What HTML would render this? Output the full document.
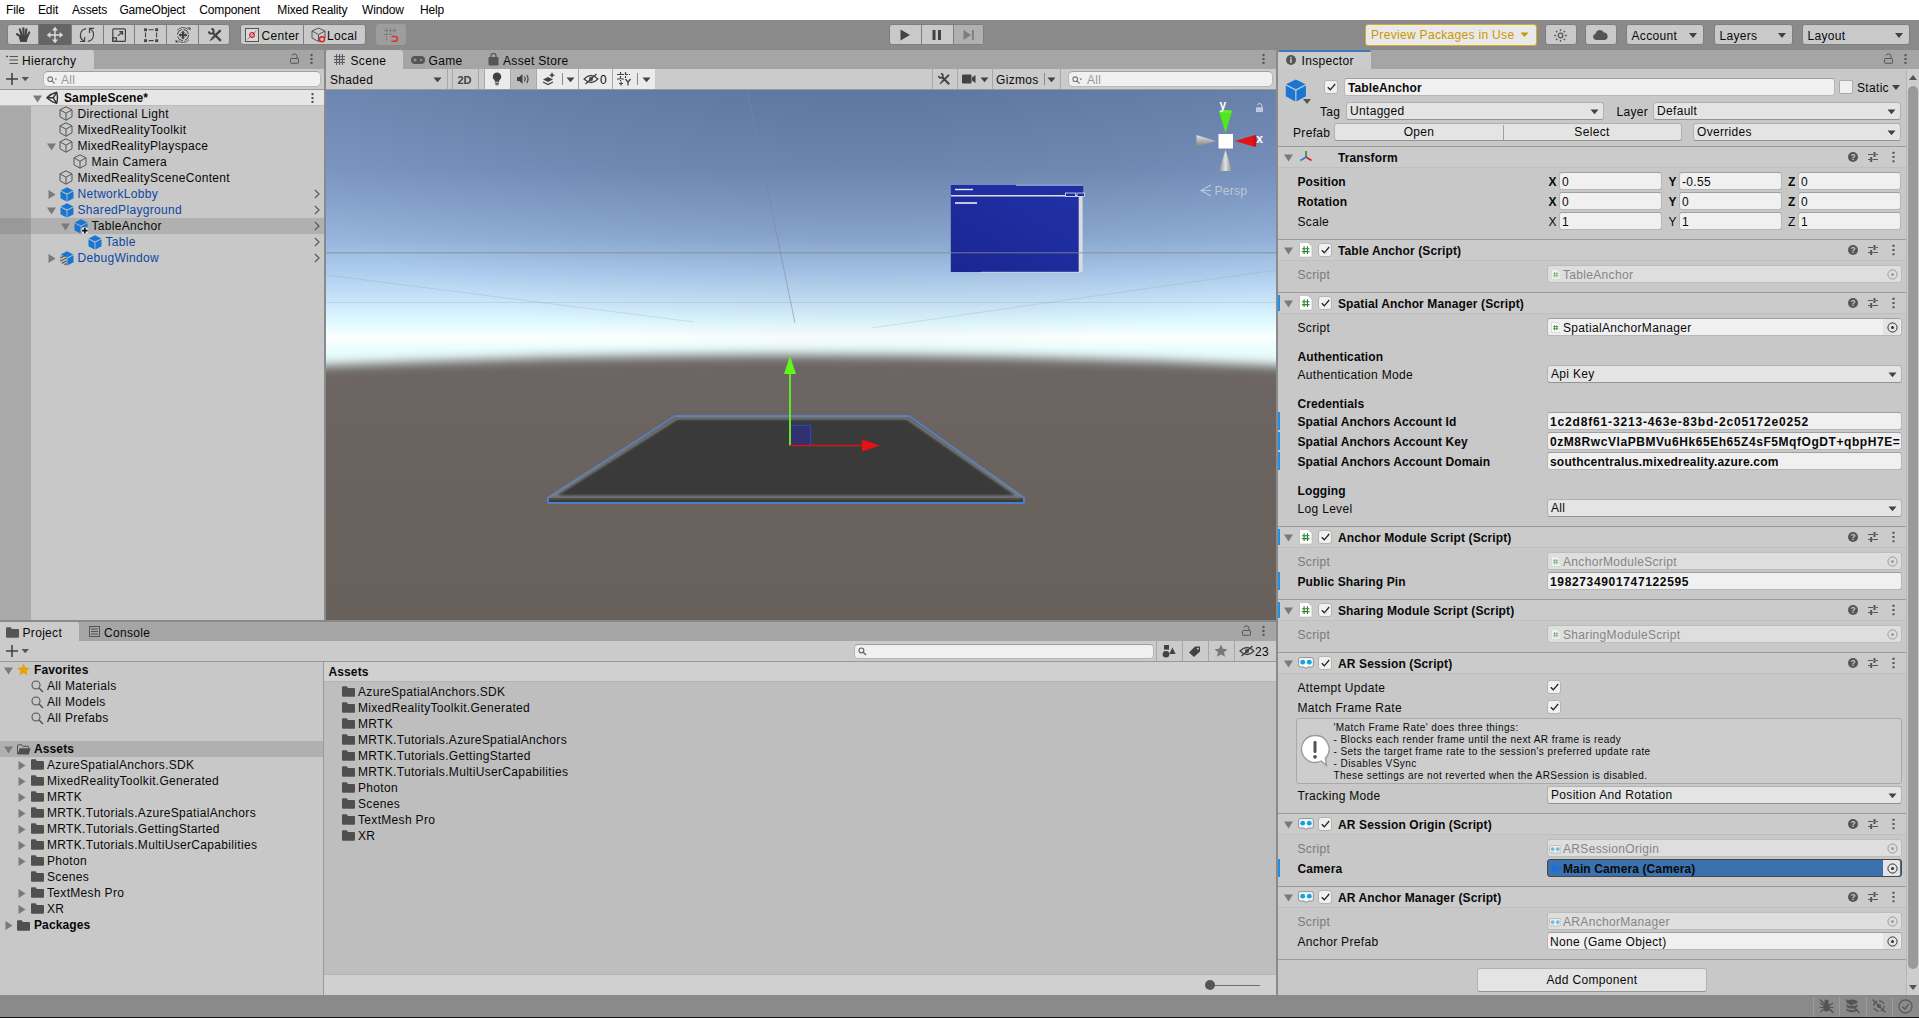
<!DOCTYPE html>
<html lang="en"><head><meta charset="utf-8"><title>Unity - SampleScene</title>
<style>
*{box-sizing:border-box}
html,body{margin:0;padding:0}
body{width:1919px;height:1018px;overflow:hidden;position:relative;background:#8a8a8a;
 font-family:"Liberation Sans",sans-serif;font-size:12px;color:#090909;letter-spacing:.32px}
div,svg,span.a{position:absolute}
#app{left:0;top:0;width:1919px;height:1018px;overflow:hidden}
.t{white-space:pre;line-height:16px;height:16px}
.b{font-weight:700;letter-spacing:.12px}
.g{color:#6e6e6e}
.fld{background:#f0f0f0;border:1px solid #b7b7b7;border-top-color:#a0a0a0;border-radius:3px}
.dd{background:#e4e4e4;border:1px solid #b2b2b2;border-bottom-color:#939393;border-radius:3px}
.btn{background:#e4e4e4;border:1px solid #b2b2b2;border-bottom-color:#939393;border-radius:3px;text-align:center;line-height:14px}
.tb{background:#c9c9c9;border-radius:3px;border:1px solid #7e7e7e}
.tab{background:#cbcbcb;border-radius:3px 3px 0 0}
.menu{font-size:12px;letter-spacing:-.15px;color:#000;white-space:pre;line-height:20px;top:0}
</style></head>
<body>
<div id="app">
<div style="left:0px;top:0px;width:1919px;height:20px;background:#fff"></div>
<div class="menu" style="left:6px;height:20px">File</div>
<div class="menu" style="left:38px;height:20px">Edit</div>
<div class="menu" style="left:72px;height:20px">Assets</div>
<div class="menu" style="left:119.4px;height:20px">GameObject</div>
<div class="menu" style="left:199.3px;height:20px">Component</div>
<div class="menu" style="left:277.3px;height:20px">Mixed Reality</div>
<div class="menu" style="left:362px;height:20px">Window</div>
<div class="menu" style="left:420px;height:20px">Help</div>
<div style="left:0px;top:20px;width:1919px;height:30px;background:#8a8a8a"></div>
<div style="left:7px;top:24px;width:223px;height:21px;background:#c9c9c9;border-radius:3px;border:1px solid #7e7e7e"></div>
<div style="left:38.5px;top:24px;width:32.5px;height:21px;background:#656565"></div>
<div style="left:38.3px;top:24px;width:1px;height:21px;background:#7e7e7e"></div>
<div style="left:70.5px;top:24px;width:1px;height:21px;background:#7e7e7e"></div>
<div style="left:102.5px;top:24px;width:1px;height:21px;background:#7e7e7e"></div>
<div style="left:134.3px;top:24px;width:1px;height:21px;background:#7e7e7e"></div>
<div style="left:166.4px;top:24px;width:1px;height:21px;background:#7e7e7e"></div>
<div style="left:198.3px;top:24px;width:1px;height:21px;background:#7e7e7e"></div>
<svg style="left:14px;top:26px;" width="18" height="18" viewBox="14 26 18 18"><g stroke="#424242" stroke-width="2.1" stroke-linecap="round" fill="none"><path d="M21.6 37.2L16.9 34.2"/><path d="M21.9 36L19.9 29.2"/><path d="M23.6 36L23.4 28.2"/><path d="M25.4 36L26.4 29.2"/><path d="M26.6 38L29.2 32.4"/></g><path d="M19.6 35.5L28 35.2L26.8 42H20.2L18.8 37Z" fill="#424242"/></svg>
<svg style="left:46px;top:26px;" width="18" height="18" viewBox="46 26 18 18"><g fill="#dedede"><path d="M55 26.8L58 30.4H55.7V34.3H59.6V32L63.2 35L59.6 38V35.7H55.7V39.6H58L55 43.2L52 39.6H54.3V35.7H50.4V38L46.8 35L50.4 32V34.3H54.3V30.4H52Z"/></g></svg>
<svg style="left:78px;top:26px;" width="18" height="18" viewBox="78 26 18 18"><g stroke="#424242" stroke-width="1.2" fill="none"><path d="M86.2 28.6A6.6 6.6 0 0 0 84.4 41.2"/><path d="M80 41.5H84.6V37"/><path d="M87.8 41.4A6.6 6.6 0 0 0 89.6 28.8"/><path d="M94.2 28.4H89.5V33"/></g></svg>
<svg style="left:110px;top:26px;" width="18" height="18" viewBox="110 26 18 18"><g stroke="#424242" stroke-width="1.2" fill="none"><rect x="112.8" y="28.8" width="12.6" height="12.6" rx="1"/><rect x="112.8" y="37.8" width="3.6" height="3.6"/><path d="M118 35.9L122.4 31.8M119.3 31.7H122.5V34.9"/></g></svg>
<svg style="left:142px;top:26px;" width="18" height="18" viewBox="142 26 18 18"><g stroke="#424242" stroke-width="1.1" fill="none"><path d="M148.6 29.7H153.6M148.6 40.6H153.6M145.5 32.6V37.6M156.6 32.6V37.6"/></g><g fill="#424242"><rect x="144.1" y="28.3" width="2.9" height="2.9"/><rect x="155.2" y="28.3" width="2.9" height="2.9"/><rect x="144.1" y="39.2" width="2.9" height="2.9"/><rect x="155.2" y="39.2" width="2.9" height="2.9"/></g></svg>
<svg style="left:174px;top:26px;" width="18" height="18" viewBox="174 26 18 18"><g stroke="#424242" stroke-width="1" fill="none"><circle cx="183" cy="35" r="5.6" stroke-dasharray="6.8 2"/><path d="M177.2 30.2A7.6 7.6 0 0 1 188.2 29.6M188.8 39.8A7.6 7.6 0 0 1 177.8 40.4" stroke-opacity=".8"/></g><g fill="#424242"><path d="M183 30.4L185 33H184V34H185V33L187.6 35L185 37V36H184V37H185L183 39.6L181 37H182V36H181V37L178.4 35L181 33V34H182V33H181Z"/><path d="M190.4 27.6V30.6L187.4 27.6ZM175.6 42.4V39.4L178.6 42.4Z"/></g></svg>
<svg style="left:208px;top:27.5px;" width="14.689999999999998" height="14.124999999999998" viewBox="0 0 13 12.5"><g stroke="#424242" fill="none"><path d="M4.4 4.4L11.4 11.4" stroke-width="2.1"/><path d="M2.99 .61A2.2 2.2 0 1 1 .61 2.99" stroke-width="1.7"/><path d="M11.2 1.9L4 9.1" stroke-width="2"/></g><path d="M3.2 8.4L1.3 11.7L4.7 9.9Z" fill="#424242"/></svg>
<div style="left:240px;top:24px;width:126px;height:21px;background:#c9c9c9;border-radius:3px;border:1px solid #7e7e7e"></div>
<div style="left:302.5px;top:24px;width:1px;height:21px;background:#7e7e7e"></div>
<svg style="left:245px;top:28px;" width="14" height="14" viewBox="0 0 14 14"><rect x=".5" y=".5" width="13" height="13" fill="#d8d8d8" stroke="#555" stroke-width="1"/><path d="M2.5 11.5L11.5 2.5" stroke="#777" stroke-width=".8"/><circle cx="7" cy="7" r="2.3" fill="none" stroke="#d22" stroke-width="1.3"/></svg>
<div class="t" style="left:261.5px;top:27.5px;">Center</div>
<svg style="left:311px;top:27px;" width="16" height="17" viewBox="0 0 16 17"><g stroke="#555" stroke-width="1" fill="none"><path d="M7.5 1L14 4V11L7.5 14.5L1 11V4Z"/><path d="M1 4L7.5 7.5L14 4M7.5 7.5V14.5"/></g><circle cx="11" cy="12.3" r="2.5" fill="#c9c9c9" stroke="#d22" stroke-width="1.4"/></svg>
<div class="t" style="left:327px;top:27.5px;">Local</div>
<div style="left:376px;top:24px;width:30px;height:21px;background:#9d9d9d;border-radius:3px"></div>
<svg style="left:383px;top:27px;" width="17" height="16" viewBox="0 0 17 16"><g stroke="#777" stroke-width="1" stroke-dasharray="1.6 1"><path d="M3.5 1V13M7.5 1V8M11.5 1V6M1 3.5H13M1 7.5H7"/></g><path d="M8.5 9.5H12 A2.4 2.4 0 0 1 12 14.3H8.5" stroke="#d33" stroke-width="1.6" fill="none"/></svg>
<div style="left:889px;top:24px;width:94.5px;height:21px;background:#c9c9c9;border-radius:3px;border:1px solid #7e7e7e"></div>
<div style="left:953px;top:25px;width:29.5px;height:19px;background:#b0b0b0;border-radius:0 2px 2px 0"></div>
<div style="left:920.5px;top:24px;width:1px;height:21px;background:#7e7e7e"></div>
<div style="left:952.5px;top:24px;width:1px;height:21px;background:#7e7e7e"></div>
<svg style="left:899px;top:29px;" width="12" height="12" viewBox="0 0 12 12"><path d="M1.5 .5L11 6L1.5 11.5Z" fill="#424242"/></svg>
<svg style="left:931px;top:29px;" width="12" height="12" viewBox="0 0 12 12"><rect x="1.5" y="1" width="3" height="10" fill="#424242"/><rect x="7" y="1" width="3" height="10" fill="#424242"/></svg>
<svg style="left:963px;top:29px;" width="12" height="12" viewBox="0 0 12 12"><path d="M.5 1L8 6L.5 11Z" fill="#7d7d7d"/><rect x="9" y="1" width="1.8" height="10" fill="#7d7d7d"/></svg>
<div style="left:1364.5px;top:24px;width:172px;height:21.5px;background:#e9e9e9;border:1px solid #d9a920;border-radius:3px"></div>
<div class="t" style="left:1371px;top:26.5px;color:#c99700">Preview Packages in Use</div>
<svg style="left:1520px;top:32px;" width="9" height="6" viewBox="0 0 9 6"><path d="M.5 .5H8.5L4.5 5Z" fill="#c99700"/></svg>
<div class="tb" style="left:1545px;top:24px;width:31.5px;height:21px;"></div>
<svg style="left:1553px;top:27.5px;" width="15" height="15" viewBox="0 0 15 15"><g fill="none" stroke="#555" stroke-width="1.3"><circle cx="7.5" cy="7.5" r="2.3"/><path d="M7.5 1.2V3M7.5 12V13.8M1.2 7.5H3M12 7.5H13.8M3 3L4.3 4.3M10.7 10.7L12 12M3 12L4.3 10.7M10.7 4.3L12 3" stroke-dasharray="none"/></g></svg>
<div class="tb" style="left:1585px;top:24px;width:31.5px;height:21px;"></div>
<svg style="left:1592px;top:29px;" width="17" height="12" viewBox="0 0 17 12"><path d="M4 11A3.2 3.2 0 0 1 3.6 4.7A4.3 4.3 0 0 1 11.8 3.6A3.8 3.8 0 0 1 13 11Z" fill="#555"/></svg>
<div class="tb" style="left:1625.5px;top:24px;width:78.5px;height:21px;"></div>
<div class="t" style="left:1631.5px;top:27.5px;">Account</div>
<svg style="left:1689.0px;top:33px;" width="8" height="5" viewBox="0 0 8 5"><path d="M0 0H8L4 5Z" fill="#424242"/></svg>
<div class="tb" style="left:1713.5px;top:24px;width:79px;height:21px;"></div>
<div class="t" style="left:1719.5px;top:27.5px;">Layers</div>
<svg style="left:1777.5px;top:33px;" width="8" height="5" viewBox="0 0 8 5"><path d="M0 0H8L4 5Z" fill="#424242"/></svg>
<div class="tb" style="left:1801.5px;top:24px;width:108.5px;height:21px;"></div>
<div class="t" style="left:1807.5px;top:27.5px;">Layout</div>
<svg style="left:1895.0px;top:33px;" width="8" height="5" viewBox="0 0 8 5"><path d="M0 0H8L4 5Z" fill="#424242"/></svg>
<div style="left:0px;top:50px;width:324px;height:570px;background:#c8c8c8"></div>
<div style="left:0px;top:50px;width:324px;height:19px;background:#a5a5a5"></div>
<div class="tab" style="left:0px;top:50px;width:94px;height:19px;border-radius:0 3px 0 0"></div>
<svg style="left:6px;top:55px;" width="12" height="10" viewBox="0 0 12 10"><g stroke="#555" stroke-width="1"><path d="M3.5 1.5H12M3.5 5H12M3.5 8.5H12"/><path d="M0 1.5H2M1 .5V2.5" /></g></svg>
<div class="t" style="left:22px;top:52.5px;">Hierarchy</div>
<svg style="left:289.5px;top:52.5px;" width="9" height="11" viewBox="0 0 9 11"><path d="M1.9 2.6A2.7 2.7 0 0 1 7.1 3.3V5.5" stroke="#555" fill="none" stroke-width="1"/><rect x=".5" y="5.5" width="8" height="4.8" rx=".8" fill="none" stroke="#555" stroke-width="1"/></svg>
<svg style="left:309.5px;top:52.5px;" width="3" height="12" viewBox="0 0 3 12"><rect x=".4" y="1.10" width="2.2" height="2.2" rx=".7" fill="#555"/><rect x=".4" y="4.90" width="2.2" height="2.2" rx=".7" fill="#555"/><rect x=".4" y="8.70" width="2.2" height="2.2" rx=".7" fill="#555"/></svg>
<div style="left:0px;top:69px;width:324px;height:20px;background:#cbcbcb"></div>
<div style="left:0px;top:89px;width:324px;height:1px;background:#999"></div>
<svg style="left:5px;top:72px;" width="28" height="14" viewBox="0 0 28 14"><path d="M7 1V13M1 7H13" stroke="#424242" stroke-width="1.6"/><path d="M16.5 5H24L20.2 9.2Z" fill="#555"/></svg>
<div class="fld" style="left:42.6px;top:71px;width:278.4px;height:15.5px;border-radius:5px"></div>
<svg style="left:46.5px;top:75.5px;" width="12" height="9" viewBox="0 0 12 9"><circle cx="3.2" cy="3.2" r="2.3" fill="none" stroke="#777" stroke-width="1.1"/><path d="M4.9 4.9L7.6 7.6" stroke="#777" stroke-width="1.3"/><path d="M7.4 2.6H10.2L8.8 4.3Z" fill="#777"/></svg>
<div class="t" style="left:61px;top:71.8px;color:#9a9a9a">All</div>
<div style="left:0px;top:90px;width:324px;height:16px;background:#e6e6e6;border-bottom:1px solid #bcbcbc"></div>
<div style="left:0px;top:106px;width:31px;height:514px;background:#aaa"></div>
<svg style="left:33px;top:95px;" width="9" height="8" viewBox="0 0 9 8"><path d="M0 .5H9L4.5 7.5Z" fill="#7a7a7a"/></svg>
<svg style="left:46px;top:91px;" width="13" height="14" viewBox="0 0 13 14"><g stroke="#333" stroke-width="1.4" fill="none" stroke-linejoin="round"><path d="M.9 6.8Q5.2 2.6 10.7 1.3Q12.2 6.8 10.7 12.3Q5.2 11 .9 6.8Z"/><path d="M1.2 6.8H7.2M7.2 6.8L10.5 1.8M7.2 6.8L10.5 11.8"/></g></svg>
<div class="t b" style="left:64px;top:90px;">SampleScene*</div>
<svg style="left:310.5px;top:92px;" width="3" height="12" viewBox="0 0 3 12"><rect x=".4" y="1.10" width="2.2" height="2.2" rx=".7" fill="#555"/><rect x=".4" y="4.90" width="2.2" height="2.2" rx=".7" fill="#555"/><rect x=".4" y="8.70" width="2.2" height="2.2" rx=".7" fill="#555"/></svg>
<svg style="left:59.4px;top:106.2px;" width="14" height="15" viewBox="0 0 14 15"><g stroke="#555" stroke-width="1" fill="none" stroke-linejoin="round"><path d="M7 .8L13 3.8V10.8L7 14.2L1 10.8V3.8Z"/><path d="M1 3.8L7 7.2L13 3.8M7 7.2V14.2"/></g></svg>
<div class="t" style="left:77.5px;top:106px;">Directional Light</div>
<svg style="left:59.4px;top:122.2px;" width="14" height="15" viewBox="0 0 14 15"><g stroke="#555" stroke-width="1" fill="none" stroke-linejoin="round"><path d="M7 .8L13 3.8V10.8L7 14.2L1 10.8V3.8Z"/><path d="M1 3.8L7 7.2L13 3.8M7 7.2V14.2"/></g></svg>
<div class="t" style="left:77.5px;top:122px;">MixedRealityToolkit</div>
<svg style="left:47px;top:143px;" width="9" height="8" viewBox="0 0 9 8"><path d="M0 .5H9L4.5 7.5Z" fill="#7a7a7a"/></svg>
<svg style="left:59.4px;top:138.2px;" width="14" height="15" viewBox="0 0 14 15"><g stroke="#555" stroke-width="1" fill="none" stroke-linejoin="round"><path d="M7 .8L13 3.8V10.8L7 14.2L1 10.8V3.8Z"/><path d="M1 3.8L7 7.2L13 3.8M7 7.2V14.2"/></g></svg>
<div class="t" style="left:77.5px;top:138px;">MixedRealityPlayspace</div>
<svg style="left:73.4px;top:154.2px;" width="14" height="15" viewBox="0 0 14 15"><g stroke="#555" stroke-width="1" fill="none" stroke-linejoin="round"><path d="M7 .8L13 3.8V10.8L7 14.2L1 10.8V3.8Z"/><path d="M1 3.8L7 7.2L13 3.8M7 7.2V14.2"/></g></svg>
<div class="t" style="left:91.5px;top:154px;">Main Camera</div>
<svg style="left:59.4px;top:170.2px;" width="14" height="15" viewBox="0 0 14 15"><g stroke="#555" stroke-width="1" fill="none" stroke-linejoin="round"><path d="M7 .8L13 3.8V10.8L7 14.2L1 10.8V3.8Z"/><path d="M1 3.8L7 7.2L13 3.8M7 7.2V14.2"/></g></svg>
<div class="t" style="left:77.5px;top:170px;">MixedRealitySceneContent</div>
<svg style="left:48px;top:189.5px;" width="8" height="9" viewBox="0 0 8 9"><path d="M.5 0V9L7.5 4.5Z" fill="#7a7a7a"/></svg>
<svg style="left:60px;top:186.5px;" width="14" height="15" viewBox="0 0 14 15"><path d="M7 .3L13.3 3.4L7 6.6L.7 3.4Z" fill="#1976d2"/><path d="M.5 4.2L6.6 7.4V14.6L.5 11.2Z" fill="#1976d2"/><path d="M13.5 4.2L7.4 7.4V14.6L13.5 11.2Z" fill="#1976d2"/></svg>
<div class="t" style="left:77.5px;top:186px;color:#0d47a1">NetworkLobby</div>
<svg style="left:314px;top:189px;" width="6" height="10" viewBox="0 0 6 10"><path d="M.8 .8L5 5L.8 9.2" stroke="#555" stroke-width="1.2" fill="none"/></svg>
<svg style="left:47px;top:207px;" width="9" height="8" viewBox="0 0 9 8"><path d="M0 .5H9L4.5 7.5Z" fill="#7a7a7a"/></svg>
<svg style="left:60px;top:202.5px;" width="14" height="15" viewBox="0 0 14 15"><path d="M7 .3L13.3 3.4L7 6.6L.7 3.4Z" fill="#1976d2"/><path d="M.5 4.2L6.6 7.4V14.6L.5 11.2Z" fill="#1976d2"/><path d="M13.5 4.2L7.4 7.4V14.6L13.5 11.2Z" fill="#1976d2"/></svg>
<div class="t" style="left:77.5px;top:202px;color:#0d47a1">SharedPlayground</div>
<svg style="left:314px;top:205px;" width="6" height="10" viewBox="0 0 6 10"><path d="M.8 .8L5 5L.8 9.2" stroke="#555" stroke-width="1.2" fill="none"/></svg>
<div style="left:0px;top:218px;width:324px;height:16px;background:#b0b0b0"></div>
<div style="left:0px;top:218px;width:31px;height:16px;background:#999"></div>
<svg style="left:61px;top:223px;" width="9" height="8" viewBox="0 0 9 8"><path d="M0 .5H9L4.5 7.5Z" fill="#7a7a7a"/></svg>
<svg style="left:74px;top:218.5px;" width="14" height="15" viewBox="0 0 14 15"><path d="M7 .3L13.3 3.4L7 6.6L.7 3.4Z" fill="#1976d2"/><path d="M.5 4.2L6.6 7.4V14.6L.5 11.2Z" fill="#1976d2"/><path d="M13.5 4.2L7.4 7.4V14.6L13.5 11.2Z" fill="#1976d2"/><circle cx="10.8" cy="11.6" r="3.6" fill="#e8e8e8"/><path d="M10.8 8.8V14.4M8 11.6H13.6" stroke="#111" stroke-width="1.7"/></svg>
<div class="t" style="left:91.5px;top:218px;">TableAnchor</div>
<svg style="left:314px;top:221px;" width="6" height="10" viewBox="0 0 6 10"><path d="M.8 .8L5 5L.8 9.2" stroke="#555" stroke-width="1.2" fill="none"/></svg>
<svg style="left:88px;top:234.5px;" width="14" height="15" viewBox="0 0 14 15"><path d="M7 .3L13.3 3.4L7 6.6L.7 3.4Z" fill="#1976d2"/><path d="M.5 4.2L6.6 7.4V14.6L.5 11.2Z" fill="#1976d2"/><path d="M13.5 4.2L7.4 7.4V14.6L13.5 11.2Z" fill="#1976d2"/></svg>
<div class="t" style="left:105.5px;top:234px;color:#0d47a1">Table</div>
<svg style="left:314px;top:237px;" width="6" height="10" viewBox="0 0 6 10"><path d="M.8 .8L5 5L.8 9.2" stroke="#555" stroke-width="1.2" fill="none"/></svg>
<svg style="left:48px;top:253.5px;" width="8" height="9" viewBox="0 0 8 9"><path d="M.5 0V9L7.5 4.5Z" fill="#7a7a7a"/></svg>
<svg style="left:60px;top:250.5px;" width="14" height="15" viewBox="0 0 14 15"><path d="M7 .3L13.3 3.4L7 6.6L.7 3.4Z" fill="#1976d2"/><path d="M.5 4.2L6.6 7.4V14.6L.5 11.2Z" fill="#1976d2"/><path d="M13.5 4.2L7.4 7.4V14.6L13.5 11.2Z" fill="#1976d2"/><path d="M.5 4.2L6.6 7.4V14.6L.5 11.2Z" fill="#c8c8c8"/><g stroke="#555" stroke-width="1.3"><path d="M.5 7L5 4.5M.5 10L6.6 7M2 12.2L6.6 10M4.5 13.6L6.6 12.6"/></g></svg>
<div class="t" style="left:77.5px;top:250px;color:#0d47a1">DebugWindow</div>
<svg style="left:314px;top:253px;" width="6" height="10" viewBox="0 0 6 10"><path d="M.8 .8L5 5L.8 9.2" stroke="#555" stroke-width="1.2" fill="none"/></svg>
<div style="left:326px;top:50px;width:950px;height:570px;background:#c8c8c8"></div>
<div style="left:326px;top:50px;width:950px;height:19px;background:#a5a5a5"></div>
<div class="tab" style="left:326px;top:50px;width:77px;height:19px;"></div>
<svg style="left:334px;top:54px;" width="11" height="11" viewBox="0 0 11 11"><path d="M2.6 0V11M5.5 0V11M8.4 0V11M0 2.6H11M0 5.5H11M0 8.4H11" stroke="#555" stroke-width="1"/></svg>
<div class="t" style="left:350.5px;top:52.5px;">Scene</div>
<svg style="left:411px;top:56px;" width="14" height="8" viewBox="0 0 14 8"><rect x="0" y="0" width="14" height="8" rx="4" fill="#555"/><path d="M2.5 4H5.5M4 2.5V5.5" stroke="#a5a5a5" stroke-width="1"/><circle cx="10" cy="4" r="1" fill="#a5a5a5"/></svg>
<div class="t" style="left:428.5px;top:52.5px;">Game</div>
<svg style="left:488px;top:53px;" width="11" height="13" viewBox="0 0 11 13"><path d="M3 4V2.8A2.5 2.5 0 0 1 8 2.8V4" stroke="#555" fill="none" stroke-width="1.2"/><rect x=".5" y="4" width="10" height="8.5" rx="1" fill="#555"/></svg>
<div class="t" style="left:503px;top:52.5px;">Asset Store</div>
<svg style="left:1261.5px;top:52.5px;" width="3" height="12" viewBox="0 0 3 12"><rect x=".4" y="1.10" width="2.2" height="2.2" rx=".7" fill="#555"/><rect x=".4" y="4.90" width="2.2" height="2.2" rx=".7" fill="#555"/><rect x=".4" y="8.70" width="2.2" height="2.2" rx=".7" fill="#555"/></svg>
<div style="left:326px;top:69px;width:950px;height:20px;background:#cbcbcb"></div>
<div style="left:326px;top:89px;width:950px;height:1px;background:#999"></div>
<div class="t" style="left:330px;top:71.5px;">Shaded</div>
<svg style="left:433px;top:77px;" width="9" height="6" viewBox="0 0 9 6"><path d="M.5 .5H8.5L4.5 5.2Z" fill="#424242"/></svg>
<div style="left:446.5px;top:69px;width:1px;height:20px;background:#a8a8a8"></div>
<div style="left:452px;top:69px;width:1px;height:20px;background:#a8a8a8"></div>
<div style="left:478px;top:69px;width:1px;height:20px;background:#a8a8a8"></div>
<div style="left:484px;top:69px;width:1px;height:20px;background:#a8a8a8"></div>
<div style="left:931.5px;top:69px;width:1px;height:20px;background:#a8a8a8"></div>
<div style="left:956.5px;top:69px;width:1px;height:20px;background:#a8a8a8"></div>
<div style="left:992px;top:69px;width:1px;height:20px;background:#a8a8a8"></div>
<div style="left:1060px;top:69px;width:1px;height:20px;background:#a8a8a8"></div>
<div class="t" style="left:457.5px;top:71.5px;font-size:11px;letter-spacing:0;font-weight:700;color:#444">2D</div>
<div style="left:484.5px;top:69px;width:25.5px;height:20px;background:#ebebeb"></div>
<div style="left:510px;top:69px;width:26.5px;height:20px;background:#bdbdbd"></div>
<div style="left:536.5px;top:69px;width:118px;height:20px;background:#ebebeb"></div>
<div style="left:510px;top:69px;width:1px;height:20px;background:#a8a8a8"></div>
<div style="left:536px;top:69px;width:1px;height:20px;background:#a8a8a8"></div>
<div style="left:578px;top:69px;width:1px;height:20px;background:#a8a8a8"></div>
<div style="left:611.5px;top:69px;width:1px;height:20px;background:#a8a8a8"></div>
<svg style="left:492px;top:72px;" width="10" height="14" viewBox="0 0 10 14"><path d="M5 .5A4.2 4.2 0 0 1 7.3 8.2V9.8H2.7V8.2A4.2 4.2 0 0 1 5 .5Z" fill="#424242"/><rect x="3" y="10.6" width="4" height="1.2" fill="#424242"/><rect x="3.6" y="12.3" width="2.8" height="1" fill="#424242"/></svg>
<svg style="left:516px;top:73px;" width="15" height="12" viewBox="0 0 15 12"><path d="M1 4H3.2L6.5 1V11L3.2 8H1Z" fill="#424242"/><path d="M8.5 3.5Q10 6 8.5 8.5M10.8 2Q13.3 6 10.8 10" stroke="#424242" fill="none" stroke-width="1.2"/></svg>
<svg style="left:542px;top:72px;" width="14" height="14" viewBox="0 0 14 14"><path d="M1 7.5L6 5L11 7.5L6 10Z" fill="#424242"/><path d="M1 10L6 12.6L11 10" stroke="#424242" fill="none" stroke-width="1.3"/><path d="M10 0L10.9 2.3L13.2 3.2L10.9 4.1L10 6.4L9.1 4.1L6.8 3.2L9.1 2.3Z" fill="#424242"/></svg>
<div style="left:561.5px;top:73px;width:1px;height:12px;background:#8a8a8a"></div>
<svg style="left:565.5px;top:77px;" width="9" height="6" viewBox="0 0 9 6"><path d="M.5 .5H8.5L4.5 5.2Z" fill="#424242"/></svg>
<svg style="left:583px;top:73px;" width="16" height="12" viewBox="0 0 16 12"><path d="M1 6Q8 -1 15 6Q8 13 1 6Z" stroke="#424242" fill="none" stroke-width="1.2"/><circle cx="8" cy="6" r="2" fill="#424242"/><path d="M2.5 11L13.5 1" stroke="#424242" stroke-width="1.3"/></svg>
<div class="t" style="left:600px;top:71.5px;">0</div>
<svg style="left:616px;top:72px;" width="16" height="14" viewBox="0 0 16 14"><path d="M4.5 0V9M9.5 0V6M1 2.5H14M1 7H9" stroke="#424242" stroke-width="1.2" stroke-dasharray="3 1"/><path d="M9.5 7L12 10.2L14.5 7M12 10.2V13.5" stroke="#424242" stroke-width="1.3" fill="none"/><path d="M3 11.5H7M5 9.5V13.5" stroke="#424242" stroke-width="1.1"/></svg>
<div style="left:637px;top:73px;width:1px;height:12px;background:#8a8a8a"></div>
<svg style="left:641.5px;top:77px;" width="9" height="6" viewBox="0 0 9 6"><path d="M.5 .5H8.5L4.5 5.2Z" fill="#424242"/></svg>
<svg style="left:937.5px;top:72.8px;" width="12.74" height="12.25" viewBox="0 0 13 12.5"><g stroke="#424242" fill="none"><path d="M4.4 4.4L11.4 11.4" stroke-width="2.1"/><path d="M2.99 .61A2.2 2.2 0 1 1 .61 2.99" stroke-width="1.7"/><path d="M11.2 1.9L4 9.1" stroke-width="2"/></g><path d="M3.2 8.4L1.3 11.7L4.7 9.9Z" fill="#424242"/></svg>
<svg style="left:962px;top:74px;" width="14" height="10" viewBox="0 0 14 10"><rect x="0" y=".5" width="9.5" height="9" rx="1" fill="#424242"/><path d="M10 3.5L13.5 1V9L10 6.5Z" fill="#424242"/></svg>
<svg style="left:979.5px;top:77px;" width="9" height="6" viewBox="0 0 9 6"><path d="M.5 .5H8.5L4.5 5.2Z" fill="#424242"/></svg>
<div class="t" style="left:996px;top:71.5px;">Gizmos</div>
<div style="left:1043.5px;top:73px;width:1px;height:12px;background:#8a8a8a"></div>
<svg style="left:1047px;top:77px;" width="9" height="6" viewBox="0 0 9 6"><path d="M.5 .5H8.5L4.5 5.2Z" fill="#424242"/></svg>
<div class="fld" style="left:1068px;top:71px;width:204.5px;height:15.5px;border-radius:5px"></div>
<svg style="left:1071.5px;top:75.5px;" width="12" height="9" viewBox="0 0 12 9"><circle cx="3.2" cy="3.2" r="2.3" fill="none" stroke="#777" stroke-width="1.1"/><path d="M4.9 4.9L7.6 7.6" stroke="#777" stroke-width="1.3"/><path d="M7.4 2.6H10.2L8.8 4.3Z" fill="#777"/></svg>
<div class="t" style="left:1087px;top:71.8px;color:#9a9a9a">All</div>
<svg style="left:326px;top:90px;" width="950" height="530" viewBox="0 0 950 530"><defs>
<linearGradient id="sky" x1="0" y1="0" x2="0" y2="1">
<stop offset="0" stop-color="#708bb5"/>
<stop offset=".15" stop-color="#7d98c3"/>
<stop offset=".274" stop-color="#94b2da"/>
<stop offset=".34" stop-color="#acccee"/>
<stop offset=".396" stop-color="#c8e4fa"/>
<stop offset=".443" stop-color="#e4fcff"/>
<stop offset=".466" stop-color="#fcfffe"/>
<stop offset=".49" stop-color="#e9fdfd"/>
<stop offset="1" stop-color="#e4f8f8"/>
</linearGradient>
<linearGradient id="gnd" gradientUnits="userSpaceOnUse" x1="0" y1="262" x2="0" y2="530">
<stop offset="0" stop-color="#6c6665"/>
<stop offset=".35" stop-color="#6b635f"/>
<stop offset="1" stop-color="#68605a"/>
</linearGradient>
<radialGradient id="vg" gradientUnits="userSpaceOnUse" cx="540" cy="-20" r="640" gradientTransform="translate(0 -20) scale(1 .45) translate(0 20)">
<stop offset="0" stop-color="#1a2a50" stop-opacity=".22"/>
<stop offset=".5" stop-color="#1a2a50" stop-opacity=".14"/>
<stop offset="1" stop-color="#1a2a50" stop-opacity="0"/>
</radialGradient>
<filter id="bl" color-interpolation-filters="sRGB"><feGaussianBlur stdDeviation="1.2"/></filter>
<filter id="hz" x="-5%" y="-10%" width="110%" height="120%" color-interpolation-filters="sRGB"><feGaussianBlur stdDeviation="0 5.5"/></filter>
</defs>
<rect x="0" y="0" width="950" height="530" fill="url(#sky)"/>
<rect x="0" y="0" width="950" height="260" fill="url(#vg)"/>
<path d="M-30 277Q464 253 980 277V570H-30Z" fill="url(#gnd)" filter="url(#hz)"/>
<g stroke="#7d8794" stroke-width="1" fill="none">
<path d="M0 212.5H950" stroke-opacity=".2"/>
<path d="M421 0L469 233" stroke-opacity=".55"/>
<path d="M0 185L368 232" stroke-opacity=".2"/>
<path d="M950 180L545 238" stroke-opacity=".2"/>
</g>
<defs><linearGradient id="bw" x1="0" y1="1" x2="1" y2="0"><stop offset="0" stop-color="#1a2692"/><stop offset="1" stop-color="#2030a6"/></linearGradient></defs>
<rect x="624.8" y="95" width="132.4" height="11" fill="#1f2ea3"/><rect x="624.8" y="105" width="128" height="77" fill="url(#bw)"/>
<path d="M625 105.8H757" stroke="#dcdfe8" stroke-width="1.6"/>
<rect x="752.8" y="106.5" width="3.8" height="75.5" fill="#dcdcde"/>
<path d="M655 182.3H755" stroke="#d2d4dc" stroke-width="1"/>
<path d="M690 95.3H757" stroke="#c8cce0" stroke-width=".8"/>
<path d="M629 99.5H647" stroke="#eceef6" stroke-width="1.4"/><path d="M629 113H651" stroke="#eceef6" stroke-width="1.6"/>
<rect x="739.5" y="103" width="10" height="3.4" fill="#1e2ca0" stroke="#e4e6f0" stroke-width=".8"/><rect x="751" y="103" width="7.5" height="3.4" fill="#1e2ca0" stroke="#e4e6f0" stroke-width=".8"/>
<path d="M0 162.8H950" stroke="#858b96" stroke-width="1" stroke-opacity=".85"/>
<path d="M349 326L583 326L698 408L698 413L222 413L222 408Z" fill="#3a3a3a" stroke="#4d7fc4" stroke-width="2" stroke-linejoin="round"/>
<path d="M223 408.5H697" stroke="#2c2c2c" stroke-width="1"/>
<path d="M351 328L581 328L694 407L226 407Z" fill="none" stroke="#8c8c8c" stroke-width="3" filter="url(#bl)" opacity=".8"/>
<rect x="464.5" y="335.5" width="20" height="20" fill="#303078" fill-opacity=".85" stroke="#2346d8" stroke-width="1"/>
<path d="M464 355.5V284" stroke="#64e628" stroke-width="2"/>
<path d="M464 266L458 284H470Z" fill="#60f81c"/>
<path d="M464 355.5H536" stroke="#d01818" stroke-width="1.5"/>
<path d="M554 355.5L536 349.5V361.5Z" fill="#e81010"/>
<defs><linearGradient id="gc" x1="0" y1="0" x2="0" y2="1"><stop offset="0" stop-color="#e6e6e6"/><stop offset="1" stop-color="#7a7a7a"/></linearGradient>
<linearGradient id="gc2" x1="0" y1="0" x2="1" y2="0"><stop offset="0" stop-color="#8a8a8a"/><stop offset=".5" stop-color="#e0e0e0"/><stop offset="1" stop-color="#8a8a8a"/></linearGradient></defs>
<path d="M893 21.5H906L899.5 43Z" fill="#4ee81c"/>
<ellipse cx="899.5" cy="21.5" rx="6.5" ry="1.6" fill="#62f02c"/>
<path d="M929 45V57L909 51Z" fill="#e01414"/>
<ellipse cx="929" cy="51" rx="1.6" ry="6" fill="#c81010"/>
<path d="M870.5 45V57L890 51Z" fill="url(#gc)"/>
<path d="M893 81H906L899.5 60Z" fill="url(#gc2)"/>
<rect x="892.5" y="44" width="14.5" height="14.5" fill="#fff"/>
<text x="893.5" y="19" font-family="Liberation Sans, sans-serif" font-size="12" font-weight="700" fill="#fff">y</text>
<text x="930.3" y="53.3" font-family="Liberation Sans, sans-serif" font-size="12" font-weight="700" fill="#fff">x</text>
<g stroke="#c8d2e2" fill="none" stroke-width="1"><path d="M931.4 15.2A2.3 2.3 0 0 1 935.9 15.6V17.5"/></g><rect x="930" y="17.3" width="7" height="4.8" fill="#c8d2e2" opacity=".9"/>
<path d="M885 95L875 100.5L885 106M875 100.5H885" stroke="#bcc8da" stroke-width="1.1" fill="none"/>
<text x="888.5" y="105" font-family="Liberation Sans, sans-serif" font-size="12.2" fill="#bcc8da" letter-spacing=".15">Persp</text>
</svg>
<div style="left:0px;top:622px;width:1276px;height:373px;background:#c8c8c8"></div>
<div style="left:0px;top:622px;width:1276px;height:19px;background:#a5a5a5"></div>
<div class="tab" style="left:0px;top:622px;width:79px;height:19px;border-radius:0 3px 0 0"></div>
<svg style="left:6px;top:627px;" width="13" height="11" viewBox="0 0 13 11"><path d="M0 1.2Q0 .3 1 .3H4.6L6 2H12Q13 2 13 3V9.8Q13 10.7 12 10.7H1Q0 10.7 0 9.8Z" fill="#555"/></svg>
<div class="t" style="left:22.5px;top:624.5px;">Project</div>
<svg style="left:89px;top:626px;" width="11" height="11" viewBox="0 0 11 11"><rect x=".5" y=".5" width="10" height="10" fill="none" stroke="#555" stroke-width="1"/><path d="M2 3H9M2 5.5H9M2 8H9" stroke="#555" stroke-width="1"/></svg>
<div class="t" style="left:104px;top:624.5px;">Console</div>
<svg style="left:1241.5px;top:624.5px;" width="9" height="11" viewBox="0 0 9 11"><path d="M1.9 2.6A2.7 2.7 0 0 1 7.1 3.3V5.5" stroke="#555" fill="none" stroke-width="1"/><rect x=".5" y="5.5" width="8" height="4.8" rx=".8" fill="none" stroke="#555" stroke-width="1"/></svg>
<svg style="left:1261.5px;top:624.5px;" width="3" height="12" viewBox="0 0 3 12"><rect x=".4" y="1.10" width="2.2" height="2.2" rx=".7" fill="#555"/><rect x=".4" y="4.90" width="2.2" height="2.2" rx=".7" fill="#555"/><rect x=".4" y="8.70" width="2.2" height="2.2" rx=".7" fill="#555"/></svg>
<div style="left:0px;top:641px;width:1276px;height:20px;background:#cbcbcb"></div>
<div style="left:0px;top:661px;width:1276px;height:1px;background:#999"></div>
<svg style="left:5px;top:644px;" width="28" height="14" viewBox="0 0 28 14"><path d="M7 1V13M1 7H13" stroke="#424242" stroke-width="1.6"/><path d="M16.5 5H24L20.2 9.2Z" fill="#555"/></svg>
<div class="fld" style="left:854px;top:643.5px;width:300px;height:15px;border-radius:4px"></div>
<svg style="left:858px;top:647px;" width="9" height="9" viewBox="0 0 9 9"><circle cx="3.4" cy="3.4" r="2.4" fill="none" stroke="#666" stroke-width="1.2"/><path d="M5.2 5.2L8 8" stroke="#666" stroke-width="1.4"/></svg>
<div style="left:1156px;top:641px;width:1px;height:20px;background:#a8a8a8"></div>
<div style="left:1182px;top:641px;width:1px;height:20px;background:#a8a8a8"></div>
<div style="left:1208px;top:641px;width:1px;height:20px;background:#a8a8a8"></div>
<div style="left:1234px;top:641px;width:1px;height:20px;background:#a8a8a8"></div>
<svg style="left:1162px;top:645px;" width="14" height="13" viewBox="0 0 14 13"><rect x="2" y="0" width="5" height="4.6" fill="#424242"/><circle cx="4" cy="9.3" r="3.3" fill="#424242"/><path d="M10.4 2.6L13.6 9H7.2Z" fill="#424242"/></svg>
<svg style="left:1188px;top:645px;" width="13" height="12" viewBox="0 0 13 12"><path d="M1 7.5L7 1.5H12V6.5L6 12Z" fill="#424242"/><circle cx="9.8" cy="3.8" r="1" fill="#cbcbcb"/></svg>
<svg style="left:1214px;top:644px;" width="14" height="13" viewBox="0 0 14 13"><path d="M7 .5L8.9 4.8L13.5 5.2L10 8.3L11.1 12.8L7 10.4L2.9 12.8L4 8.3L.5 5.2L5.1 4.8Z" fill="#777"/></svg>
<svg style="left:1239px;top:645px;" width="16" height="12" viewBox="0 0 16 12"><path d="M1 6Q8 -1 15 6Q8 13 1 6Z" stroke="#424242" fill="none" stroke-width="1.2"/><circle cx="8" cy="6" r="2" fill="#424242"/><path d="M2.5 11L13.5 1" stroke="#424242" stroke-width="1.3"/></svg>
<div class="t" style="left:1255px;top:643.5px;">23</div>
<div style="left:324px;top:662px;width:952px;height:333px;background:#bebebe"></div>
<div style="left:323px;top:662px;width:1px;height:333px;background:#9a9a9a"></div>
<div style="left:324px;top:662px;width:952px;height:20px;background:#d0d0d0;border-bottom:1px solid #b4b4b4"></div>
<div class="t b" style="left:328.5px;top:664px;">Assets</div>
<div style="left:324px;top:974px;width:952px;height:21px;background:#d0d0d0;border-top:1px solid #b4b4b4"></div>
<div style="left:1210px;top:984.5px;width:50px;height:1px;background:#6e6e6e"></div>
<div style="left:1205px;top:980px;width:10px;height:10px;background:#555;border-radius:5px"></div>
<svg style="left:3.5px;top:666.5px;" width="9" height="8" viewBox="0 0 9 8"><path d="M0 .5H9L4.5 7.5Z" fill="#7a7a7a"/></svg>
<svg style="left:17px;top:663px;" width="13" height="13" viewBox="0 0 13 13"><path d="M6.5 .5L8.4 4.6L12.8 5L9.5 8L10.5 12.4L6.5 10.1L2.5 12.4L3.5 8L.2 5L4.6 4.6Z" fill="#e5a50a"/></svg>
<div class="t b" style="left:34px;top:662px;">Favorites</div>
<svg style="left:31px;top:680px;" width="13" height="13" viewBox="0 0 13 13"><circle cx="5" cy="5" r="4" fill="none" stroke="#555" stroke-width="1.1"/><path d="M8 8L12 12" stroke="#555" stroke-width="1.6"/></svg>
<div class="t" style="left:47px;top:678px;">All Materials</div>
<svg style="left:31px;top:696px;" width="13" height="13" viewBox="0 0 13 13"><circle cx="5" cy="5" r="4" fill="none" stroke="#555" stroke-width="1.1"/><path d="M8 8L12 12" stroke="#555" stroke-width="1.6"/></svg>
<div class="t" style="left:47px;top:694px;">All Models</div>
<svg style="left:31px;top:712px;" width="13" height="13" viewBox="0 0 13 13"><circle cx="5" cy="5" r="4" fill="none" stroke="#555" stroke-width="1.1"/><path d="M8 8L12 12" stroke="#555" stroke-width="1.6"/></svg>
<div class="t" style="left:47px;top:710px;">All Prefabs</div>
<div style="left:0px;top:741px;width:323px;height:16px;background:#b0b0b0"></div>
<svg style="left:3.5px;top:745.5px;" width="9" height="8" viewBox="0 0 9 8"><path d="M0 .5H9L4.5 7.5Z" fill="#7a7a7a"/></svg>
<svg style="left:17px;top:743.5px;" width="14" height="11" viewBox="0 0 14 11"><path d="M.5 10V1.5Q.5 .8 1.2 .8H4.6L5.8 2.3H11Q11.6 2.3 11.6 3V4" fill="none" stroke="#4f4f4f" stroke-width="1"/><path d="M2.6 4.3H13.6L11.8 10.6H.6Z" fill="#4f4f4f"/></svg>
<div class="t b" style="left:34px;top:741px;">Assets</div>
<svg style="left:18px;top:760.5px;" width="8" height="9" viewBox="0 0 8 9"><path d="M.5 0V9L7.5 4.5Z" fill="#7a7a7a"/></svg>
<svg style="left:31px;top:759px;" width="13" height="11" viewBox="0 0 13 11"><path d="M0 1.2Q0 .3 1 .3H4.6L6 2H12Q13 2 13 3V9.8Q13 10.7 12 10.7H1Q0 10.7 0 9.8Z" fill="#4f4f4f"/></svg>
<div class="t" style="left:47px;top:757px;">AzureSpatialAnchors.SDK</div>
<svg style="left:342px;top:685.8px;" width="13" height="11" viewBox="0 0 13 11"><path d="M0 1.2Q0 .3 1 .3H4.6L6 2H12Q13 2 13 3V9.8Q13 10.7 12 10.7H1Q0 10.7 0 9.8Z" fill="#4f4f4f"/></svg>
<div class="t" style="left:358px;top:684px;">AzureSpatialAnchors.SDK</div>
<svg style="left:18px;top:776.5px;" width="8" height="9" viewBox="0 0 8 9"><path d="M.5 0V9L7.5 4.5Z" fill="#7a7a7a"/></svg>
<svg style="left:31px;top:775px;" width="13" height="11" viewBox="0 0 13 11"><path d="M0 1.2Q0 .3 1 .3H4.6L6 2H12Q13 2 13 3V9.8Q13 10.7 12 10.7H1Q0 10.7 0 9.8Z" fill="#4f4f4f"/></svg>
<div class="t" style="left:47px;top:773px;">MixedRealityToolkit.Generated</div>
<svg style="left:342px;top:701.8px;" width="13" height="11" viewBox="0 0 13 11"><path d="M0 1.2Q0 .3 1 .3H4.6L6 2H12Q13 2 13 3V9.8Q13 10.7 12 10.7H1Q0 10.7 0 9.8Z" fill="#4f4f4f"/></svg>
<div class="t" style="left:358px;top:700px;">MixedRealityToolkit.Generated</div>
<svg style="left:18px;top:792.5px;" width="8" height="9" viewBox="0 0 8 9"><path d="M.5 0V9L7.5 4.5Z" fill="#7a7a7a"/></svg>
<svg style="left:31px;top:791px;" width="13" height="11" viewBox="0 0 13 11"><path d="M0 1.2Q0 .3 1 .3H4.6L6 2H12Q13 2 13 3V9.8Q13 10.7 12 10.7H1Q0 10.7 0 9.8Z" fill="#4f4f4f"/></svg>
<div class="t" style="left:47px;top:789px;">MRTK</div>
<svg style="left:342px;top:717.8px;" width="13" height="11" viewBox="0 0 13 11"><path d="M0 1.2Q0 .3 1 .3H4.6L6 2H12Q13 2 13 3V9.8Q13 10.7 12 10.7H1Q0 10.7 0 9.8Z" fill="#4f4f4f"/></svg>
<div class="t" style="left:358px;top:716px;">MRTK</div>
<svg style="left:18px;top:808.5px;" width="8" height="9" viewBox="0 0 8 9"><path d="M.5 0V9L7.5 4.5Z" fill="#7a7a7a"/></svg>
<svg style="left:31px;top:807px;" width="13" height="11" viewBox="0 0 13 11"><path d="M0 1.2Q0 .3 1 .3H4.6L6 2H12Q13 2 13 3V9.8Q13 10.7 12 10.7H1Q0 10.7 0 9.8Z" fill="#4f4f4f"/></svg>
<div class="t" style="left:47px;top:805px;">MRTK.Tutorials.AzureSpatialAnchors</div>
<svg style="left:342px;top:733.8px;" width="13" height="11" viewBox="0 0 13 11"><path d="M0 1.2Q0 .3 1 .3H4.6L6 2H12Q13 2 13 3V9.8Q13 10.7 12 10.7H1Q0 10.7 0 9.8Z" fill="#4f4f4f"/></svg>
<div class="t" style="left:358px;top:732px;">MRTK.Tutorials.AzureSpatialAnchors</div>
<svg style="left:18px;top:824.5px;" width="8" height="9" viewBox="0 0 8 9"><path d="M.5 0V9L7.5 4.5Z" fill="#7a7a7a"/></svg>
<svg style="left:31px;top:823px;" width="13" height="11" viewBox="0 0 13 11"><path d="M0 1.2Q0 .3 1 .3H4.6L6 2H12Q13 2 13 3V9.8Q13 10.7 12 10.7H1Q0 10.7 0 9.8Z" fill="#4f4f4f"/></svg>
<div class="t" style="left:47px;top:821px;">MRTK.Tutorials.GettingStarted</div>
<svg style="left:342px;top:749.8px;" width="13" height="11" viewBox="0 0 13 11"><path d="M0 1.2Q0 .3 1 .3H4.6L6 2H12Q13 2 13 3V9.8Q13 10.7 12 10.7H1Q0 10.7 0 9.8Z" fill="#4f4f4f"/></svg>
<div class="t" style="left:358px;top:748px;">MRTK.Tutorials.GettingStarted</div>
<svg style="left:18px;top:840.5px;" width="8" height="9" viewBox="0 0 8 9"><path d="M.5 0V9L7.5 4.5Z" fill="#7a7a7a"/></svg>
<svg style="left:31px;top:839px;" width="13" height="11" viewBox="0 0 13 11"><path d="M0 1.2Q0 .3 1 .3H4.6L6 2H12Q13 2 13 3V9.8Q13 10.7 12 10.7H1Q0 10.7 0 9.8Z" fill="#4f4f4f"/></svg>
<div class="t" style="left:47px;top:837px;">MRTK.Tutorials.MultiUserCapabilities</div>
<svg style="left:342px;top:765.8px;" width="13" height="11" viewBox="0 0 13 11"><path d="M0 1.2Q0 .3 1 .3H4.6L6 2H12Q13 2 13 3V9.8Q13 10.7 12 10.7H1Q0 10.7 0 9.8Z" fill="#4f4f4f"/></svg>
<div class="t" style="left:358px;top:764px;">MRTK.Tutorials.MultiUserCapabilities</div>
<svg style="left:18px;top:856.5px;" width="8" height="9" viewBox="0 0 8 9"><path d="M.5 0V9L7.5 4.5Z" fill="#7a7a7a"/></svg>
<svg style="left:31px;top:855px;" width="13" height="11" viewBox="0 0 13 11"><path d="M0 1.2Q0 .3 1 .3H4.6L6 2H12Q13 2 13 3V9.8Q13 10.7 12 10.7H1Q0 10.7 0 9.8Z" fill="#4f4f4f"/></svg>
<div class="t" style="left:47px;top:853px;">Photon</div>
<svg style="left:342px;top:781.8px;" width="13" height="11" viewBox="0 0 13 11"><path d="M0 1.2Q0 .3 1 .3H4.6L6 2H12Q13 2 13 3V9.8Q13 10.7 12 10.7H1Q0 10.7 0 9.8Z" fill="#4f4f4f"/></svg>
<div class="t" style="left:358px;top:780px;">Photon</div>
<svg style="left:31px;top:871px;" width="13" height="11" viewBox="0 0 13 11"><path d="M0 1.2Q0 .3 1 .3H4.6L6 2H12Q13 2 13 3V9.8Q13 10.7 12 10.7H1Q0 10.7 0 9.8Z" fill="#4f4f4f"/></svg>
<div class="t" style="left:47px;top:869px;">Scenes</div>
<svg style="left:342px;top:797.8px;" width="13" height="11" viewBox="0 0 13 11"><path d="M0 1.2Q0 .3 1 .3H4.6L6 2H12Q13 2 13 3V9.8Q13 10.7 12 10.7H1Q0 10.7 0 9.8Z" fill="#4f4f4f"/></svg>
<div class="t" style="left:358px;top:796px;">Scenes</div>
<svg style="left:18px;top:888.5px;" width="8" height="9" viewBox="0 0 8 9"><path d="M.5 0V9L7.5 4.5Z" fill="#7a7a7a"/></svg>
<svg style="left:31px;top:887px;" width="13" height="11" viewBox="0 0 13 11"><path d="M0 1.2Q0 .3 1 .3H4.6L6 2H12Q13 2 13 3V9.8Q13 10.7 12 10.7H1Q0 10.7 0 9.8Z" fill="#4f4f4f"/></svg>
<div class="t" style="left:47px;top:885px;">TextMesh Pro</div>
<svg style="left:342px;top:813.8px;" width="13" height="11" viewBox="0 0 13 11"><path d="M0 1.2Q0 .3 1 .3H4.6L6 2H12Q13 2 13 3V9.8Q13 10.7 12 10.7H1Q0 10.7 0 9.8Z" fill="#4f4f4f"/></svg>
<div class="t" style="left:358px;top:812px;">TextMesh Pro</div>
<svg style="left:18px;top:904.5px;" width="8" height="9" viewBox="0 0 8 9"><path d="M.5 0V9L7.5 4.5Z" fill="#7a7a7a"/></svg>
<svg style="left:31px;top:903px;" width="13" height="11" viewBox="0 0 13 11"><path d="M0 1.2Q0 .3 1 .3H4.6L6 2H12Q13 2 13 3V9.8Q13 10.7 12 10.7H1Q0 10.7 0 9.8Z" fill="#4f4f4f"/></svg>
<div class="t" style="left:47px;top:901px;">XR</div>
<svg style="left:342px;top:829.8px;" width="13" height="11" viewBox="0 0 13 11"><path d="M0 1.2Q0 .3 1 .3H4.6L6 2H12Q13 2 13 3V9.8Q13 10.7 12 10.7H1Q0 10.7 0 9.8Z" fill="#4f4f4f"/></svg>
<div class="t" style="left:358px;top:828px;">XR</div>
<svg style="left:4.5px;top:920.5px;" width="8" height="9" viewBox="0 0 8 9"><path d="M.5 0V9L7.5 4.5Z" fill="#7a7a7a"/></svg>
<svg style="left:17px;top:919.5px;" width="13" height="11" viewBox="0 0 13 11"><path d="M0 1.2Q0 .3 1 .3H4.6L6 2H12Q13 2 13 3V9.8Q13 10.7 12 10.7H1Q0 10.7 0 9.8Z" fill="#4f4f4f"/></svg>
<div class="t b" style="left:34px;top:917px;">Packages</div>
<div style="left:1278px;top:50px;width:641px;height:945px;background:#c8c8c8"></div>
<div style="left:1278px;top:50px;width:641px;height:19px;background:#a5a5a5"></div>
<div class="tab" style="left:1278px;top:50px;width:93px;height:19px;"></div>
<div style="left:1278px;top:50px;width:93px;height:2px;background:#3a79bb;border-radius:3px 3px 0 0"></div>
<svg style="left:1286px;top:55px;" width="10" height="10" viewBox="0 0 10 10"><circle cx="5" cy="5" r="5" fill="#555"/><rect x="4.2" y="4.2" width="1.6" height="3.6" fill="#cbcbcb"/><rect x="4.2" y="2" width="1.6" height="1.5" fill="#cbcbcb"/></svg>
<div class="t" style="left:1301.5px;top:52.5px;">Inspector</div>
<svg style="left:1883.5px;top:52.5px;" width="9" height="11" viewBox="0 0 9 11"><path d="M1.9 2.6A2.7 2.7 0 0 1 7.1 3.3V5.5" stroke="#555" fill="none" stroke-width="1"/><rect x=".5" y="5.5" width="8" height="4.8" rx=".8" fill="none" stroke="#555" stroke-width="1"/></svg>
<svg style="left:1903.5px;top:52.5px;" width="3" height="12" viewBox="0 0 3 12"><rect x=".4" y="1.10" width="2.2" height="2.2" rx=".7" fill="#555"/><rect x=".4" y="4.90" width="2.2" height="2.2" rx=".7" fill="#555"/><rect x=".4" y="8.70" width="2.2" height="2.2" rx=".7" fill="#555"/></svg>
<div style="left:1906px;top:69px;width:13px;height:926px;background:#cdcdcd;border-left:1px solid #b6b6b6"></div>
<div style="left:1908px;top:86px;width:10px;height:883px;background:#9a9a9a;border-radius:5px"></div>
<svg style="left:1909px;top:74.5px;" width="8" height="5" viewBox="0 0 8 5"><path d="M0 5H8L4 0Z" fill="#555"/></svg>
<svg style="left:1909px;top:984.5px;" width="8" height="5" viewBox="0 0 8 5"><path d="M0 0H8L4 5Z" fill="#555"/></svg>
<svg style="left:1285px;top:78.5px;" width="21.7" height="23.25" viewBox="0 0 14 15"><path d="M7 .3L13.3 3.4L7 6.6L.7 3.4Z" fill="#1976d2"/><path d="M.5 4.2L6.6 7.4V14.6L.5 11.2Z" fill="#1976d2"/><path d="M13.5 4.2L7.4 7.4V14.6L13.5 11.2Z" fill="#1976d2"/></svg>
<svg style="left:1303px;top:98.5px;" width="8" height="5" viewBox="0 0 8 5"><path d="M0 0H8L4 5Z" fill="#555"/></svg>
<div style="left:1324px;top:80px;width:14px;height:14px;border-radius:3px;background:#f0f0f0;border:1px solid #b4b4b4"></div>
<svg style="left:1326.5px;top:83px;" width="9" height="8" viewBox="0 0 9 8"><path d="M.8 4.2L3.3 6.8L8.2 1" stroke="#222" stroke-width="1.3" fill="none"/></svg>
<div class="fld" style="left:1344px;top:78px;width:491px;height:18px;"></div>
<div class="t b" style="left:1348px;top:79.5px;">TableAnchor</div>
<div style="left:1839px;top:80px;width:14px;height:14px;border-radius:2px;background:#f0f0f0;border:1px solid #aaa"></div>
<div class="t" style="left:1857px;top:79.5px;">Static</div>
<svg style="left:1891.5px;top:85px;" width="8" height="5" viewBox="0 0 8 5"><path d="M0 0H8L4 5Z" fill="#424242"/></svg>
<div class="t" style="left:1320px;top:103.5px;">Tag</div>
<div class="dd" style="left:1346px;top:102px;width:258px;height:18px;"></div>
<div class="t" style="left:1350px;top:102.5px;">Untagged</div>
<svg style="left:1590px;top:108.5px;" width="9" height="6" viewBox="0 0 9 6"><path d="M.5 .5H8.5L4.5 5.2Z" fill="#424242"/></svg>
<div class="t" style="left:1616.5px;top:103.5px;">Layer</div>
<div class="dd" style="left:1653px;top:102px;width:248px;height:18px;"></div>
<div class="t" style="left:1657px;top:102.5px;">Default</div>
<svg style="left:1887px;top:108.5px;" width="9" height="6" viewBox="0 0 9 6"><path d="M.5 .5H8.5L4.5 5.2Z" fill="#424242"/></svg>
<div class="t" style="left:1293px;top:124.5px;">Prefab</div>
<div class="btn" style="left:1334px;top:123px;width:347.5px;height:18px;"></div>
<div style="left:1503px;top:124.5px;width:1px;height:15.5px;background:#a0a0a0"></div>
<div class="t" style="left:1335px;top:124px;width:168px;text-align:center">Open</div>
<div class="t" style="left:1503px;top:124px;width:178px;text-align:center">Select</div>
<div class="dd" style="left:1693px;top:123px;width:208px;height:18px;"></div>
<div class="t" style="left:1697px;top:123.5px;">Overrides</div>
<svg style="left:1887px;top:129.5px;" width="9" height="6" viewBox="0 0 9 6"><path d="M.5 .5H8.5L4.5 5.2Z" fill="#424242"/></svg>
<div style="left:1278px;top:146px;width:628px;height:1px;background:#9a9a9a"></div>
<div style="left:1278px;top:147px;width:628px;height:20.5px;background:#cbcbcb;border-bottom:1px solid #bfbfbf"></div>
<svg style="left:1284px;top:153.5px;" width="9" height="8" viewBox="0 0 9 8"><path d="M0 .5H9L4.5 7.5Z" fill="#7a7a7a"/></svg>
<svg style="left:1299px;top:150px;" width="14" height="13" viewBox="0 0 14 13"><path d="M7 7V1" stroke="#2e8b2e" stroke-width="1.6"/><path d="M7 7L1.5 10.5" stroke="#2a7de1" stroke-width="1.6"/><path d="M7 7L12.5 10.5" stroke="#d32222" stroke-width="1.6"/></svg>
<div class="t b" style="left:1338px;top:149.7px;">Transform</div>
<svg style="left:1848px;top:152px;" width="10" height="10" viewBox="0 0 10 10"><circle cx="5" cy="5" r="5" fill="#555"/><text x="5" y="8.2" text-anchor="middle" font-family="Liberation Sans, sans-serif" font-weight="700" font-size="8.5" fill="#cbcbcb" letter-spacing="0">?</text></svg>
<svg style="left:1868px;top:152px;" width="10" height="10" viewBox="0 0 10 10"><path d="M0 2.5H5M8 2.5H10M0 7.5H2M4.5 7.5H10" stroke="#555" stroke-width="1.2"/><path d="M6.5 0V5M3.2 5V10" stroke="#555" stroke-width="2"/></svg>
<svg style="left:1891.5px;top:151px;" width="3" height="12" viewBox="0 0 3 12"><rect x=".4" y="0.65" width="2.2" height="2.2" rx=".7" fill="#555"/><rect x=".4" y="4.90" width="2.2" height="2.2" rx=".7" fill="#555"/><rect x=".4" y="9.15" width="2.2" height="2.2" rx=".7" fill="#555"/></svg>
<div class="t b" style="left:1297.5px;top:173.5px;">Position</div>
<div class="t b" style="left:1548.5px;top:173.5px;">X</div>
<div class="fld" style="left:1559px;top:172.0px;width:103px;height:18px;"></div>
<div class="t" style="left:1562px;top:173.5px;max-width:99px;overflow:hidden">0</div>
<div class="t b" style="left:1668.5px;top:173.5px;">Y</div>
<div class="fld" style="left:1679px;top:172.0px;width:103px;height:18px;"></div>
<div class="t" style="left:1682px;top:173.5px;max-width:99px;overflow:hidden">-0.55</div>
<div class="t b" style="left:1788.0px;top:173.5px;">Z</div>
<div class="fld" style="left:1798px;top:172.0px;width:103px;height:18px;"></div>
<div class="t" style="left:1801px;top:173.5px;max-width:99px;overflow:hidden">0</div>
<div class="t b" style="left:1297.5px;top:193.5px;">Rotation</div>
<div class="t b" style="left:1548.5px;top:193.5px;">X</div>
<div class="fld" style="left:1559px;top:192.0px;width:103px;height:18px;"></div>
<div class="t" style="left:1562px;top:193.5px;max-width:99px;overflow:hidden">0</div>
<div class="t b" style="left:1668.5px;top:193.5px;">Y</div>
<div class="fld" style="left:1679px;top:192.0px;width:103px;height:18px;"></div>
<div class="t" style="left:1682px;top:193.5px;max-width:99px;overflow:hidden">0</div>
<div class="t b" style="left:1788.0px;top:193.5px;">Z</div>
<div class="fld" style="left:1798px;top:192.0px;width:103px;height:18px;"></div>
<div class="t" style="left:1801px;top:193.5px;max-width:99px;overflow:hidden">0</div>
<div class="t" style="left:1297.5px;top:213.5px;">Scale</div>
<div class="t" style="left:1548.5px;top:213.5px;">X</div>
<div class="fld" style="left:1559px;top:212.0px;width:103px;height:18px;"></div>
<div class="t" style="left:1562px;top:213.5px;max-width:99px;overflow:hidden">1</div>
<div class="t" style="left:1668.5px;top:213.5px;">Y</div>
<div class="fld" style="left:1679px;top:212.0px;width:103px;height:18px;"></div>
<div class="t" style="left:1682px;top:213.5px;max-width:99px;overflow:hidden">1</div>
<div class="t" style="left:1788.0px;top:213.5px;">Z</div>
<div class="fld" style="left:1798px;top:212.0px;width:103px;height:18px;"></div>
<div class="t" style="left:1801px;top:213.5px;max-width:99px;overflow:hidden">1</div>
<div style="left:1278px;top:239px;width:628px;height:1px;background:#9a9a9a"></div>
<div style="left:1278px;top:240px;width:628px;height:20.5px;background:#cbcbcb;border-bottom:1px solid #bfbfbf"></div>
<svg style="left:1284px;top:246.5px;" width="9" height="8" viewBox="0 0 9 8"><path d="M0 .5H9L4.5 7.5Z" fill="#7a7a7a"/></svg>
<svg style="left:1299px;top:242.2px;opacity:1" width="13.52" height="15.600000000000001" viewBox="0 0 13 15"><path d="M1.5 .5H8.5L12.5 4V13.5Q12.5 14.5 11.5 14.5H1.5Q.5 14.5 .5 13.5V1.5Q.5 .5 1.5 .5Z" fill="#fff" stroke="#b8b8b8" stroke-width=".7"/><path d="M4.9 4.2V11.6M8.1 4.2V11.6M2.9 6.5H10.1M2.9 9.3H10.1" stroke="#2c842c" stroke-width="1.1"/></svg>
<div style="left:1318px;top:243px;width:14px;height:14px;border-radius:3px;background:#f0f0f0;border:1px solid #b4b4b4"></div>
<svg style="left:1320.5px;top:246px;" width="9" height="8" viewBox="0 0 9 8"><path d="M.8 4.2L3.3 6.8L8.2 1" stroke="#222" stroke-width="1.3" fill="none"/></svg>
<div class="t b" style="left:1338px;top:242.7px;">Table Anchor (Script)</div>
<svg style="left:1848px;top:245px;" width="10" height="10" viewBox="0 0 10 10"><circle cx="5" cy="5" r="5" fill="#555"/><text x="5" y="8.2" text-anchor="middle" font-family="Liberation Sans, sans-serif" font-weight="700" font-size="8.5" fill="#cbcbcb" letter-spacing="0">?</text></svg>
<svg style="left:1868px;top:245px;" width="10" height="10" viewBox="0 0 10 10"><path d="M0 2.5H5M8 2.5H10M0 7.5H2M4.5 7.5H10" stroke="#555" stroke-width="1.2"/><path d="M6.5 0V5M3.2 5V10" stroke="#555" stroke-width="2"/></svg>
<svg style="left:1891.5px;top:244px;" width="3" height="12" viewBox="0 0 3 12"><rect x=".4" y="0.65" width="2.2" height="2.2" rx=".7" fill="#555"/><rect x=".4" y="4.90" width="2.2" height="2.2" rx=".7" fill="#555"/><rect x=".4" y="9.15" width="2.2" height="2.2" rx=".7" fill="#555"/></svg>
<div class="t" style="left:1297.5px;top:266.5px;color:#7a7a7a">Script</div>
<div class="fld" style="left:1547px;top:265.0px;width:355px;height:18px;background:#dedede;border-color:#bcbcbc"></div>
<div style="left:1883px;top:266.0px;width:17px;height:16px;background:#dedede;border-radius:0 2px 2px 0"></div>
<svg style="left:1886.5px;top:268.5px;" width="11" height="11" viewBox="0 0 11 11"><circle cx="5.5" cy="5.5" r="4.6" fill="none" stroke="#9a9a9a" stroke-width="1"/><circle cx="5.5" cy="5.5" r="1.5" fill="#9a9a9a"/></svg>
<svg style="left:1550.5px;top:269.0px;opacity:0.55" width="9.36" height="10.799999999999999" viewBox="0 0 13 15"><path d="M1.5 .5H8.5L12.5 4V13.5Q12.5 14.5 11.5 14.5H1.5Q.5 14.5 .5 13.5V1.5Q.5 .5 1.5 .5Z" fill="#fff" stroke="#b8b8b8" stroke-width=".7"/><path d="M4.9 4.2V11.6M8.1 4.2V11.6M2.9 6.5H10.1M2.9 9.3H10.1" stroke="#2c842c" stroke-width="1.1"/></svg>
<div class="t" style="left:1563px;top:266.5px;color:#858585">TableAnchor</div>
<div style="left:1278px;top:292px;width:628px;height:1px;background:#9a9a9a"></div>
<div style="left:1278px;top:293px;width:628px;height:20.5px;background:#cbcbcb;border-bottom:1px solid #bfbfbf"></div>
<div style="left:1278px;top:295px;width:2px;height:16px;background:#1e90e8"></div>
<svg style="left:1284px;top:299.5px;" width="9" height="8" viewBox="0 0 9 8"><path d="M0 .5H9L4.5 7.5Z" fill="#7a7a7a"/></svg>
<svg style="left:1299px;top:295.2px;opacity:1" width="13.52" height="15.600000000000001" viewBox="0 0 13 15"><path d="M1.5 .5H8.5L12.5 4V13.5Q12.5 14.5 11.5 14.5H1.5Q.5 14.5 .5 13.5V1.5Q.5 .5 1.5 .5Z" fill="#fff" stroke="#b8b8b8" stroke-width=".7"/><path d="M4.9 4.2V11.6M8.1 4.2V11.6M2.9 6.5H10.1M2.9 9.3H10.1" stroke="#2c842c" stroke-width="1.1"/></svg>
<div style="left:1318px;top:296px;width:14px;height:14px;border-radius:3px;background:#f0f0f0;border:1px solid #b4b4b4"></div>
<svg style="left:1320.5px;top:299px;" width="9" height="8" viewBox="0 0 9 8"><path d="M.8 4.2L3.3 6.8L8.2 1" stroke="#222" stroke-width="1.3" fill="none"/></svg>
<div class="t b" style="left:1338px;top:295.7px;">Spatial Anchor Manager (Script)</div>
<svg style="left:1848px;top:298px;" width="10" height="10" viewBox="0 0 10 10"><circle cx="5" cy="5" r="5" fill="#555"/><text x="5" y="8.2" text-anchor="middle" font-family="Liberation Sans, sans-serif" font-weight="700" font-size="8.5" fill="#cbcbcb" letter-spacing="0">?</text></svg>
<svg style="left:1868px;top:298px;" width="10" height="10" viewBox="0 0 10 10"><path d="M0 2.5H5M8 2.5H10M0 7.5H2M4.5 7.5H10" stroke="#555" stroke-width="1.2"/><path d="M6.5 0V5M3.2 5V10" stroke="#555" stroke-width="2"/></svg>
<svg style="left:1891.5px;top:297px;" width="3" height="12" viewBox="0 0 3 12"><rect x=".4" y="0.65" width="2.2" height="2.2" rx=".7" fill="#555"/><rect x=".4" y="4.90" width="2.2" height="2.2" rx=".7" fill="#555"/><rect x=".4" y="9.15" width="2.2" height="2.2" rx=".7" fill="#555"/></svg>
<div class="t" style="left:1297.5px;top:319.5px;">Script</div>
<div class="fld" style="left:1547px;top:318.0px;width:355px;height:18px;background:#f0f0f0"></div>
<div style="left:1883px;top:319.0px;width:17px;height:16px;background:#e4e4e4;border-radius:0 2px 2px 0"></div>
<svg style="left:1886.5px;top:321.5px;" width="11" height="11" viewBox="0 0 11 11"><circle cx="5.5" cy="5.5" r="4.6" fill="none" stroke="#333" stroke-width="1"/><circle cx="5.5" cy="5.5" r="1.5" fill="#333"/></svg>
<svg style="left:1550.5px;top:322.0px;opacity:1" width="9.36" height="10.799999999999999" viewBox="0 0 13 15"><path d="M1.5 .5H8.5L12.5 4V13.5Q12.5 14.5 11.5 14.5H1.5Q.5 14.5 .5 13.5V1.5Q.5 .5 1.5 .5Z" fill="#fff" stroke="#b8b8b8" stroke-width=".7"/><path d="M4.9 4.2V11.6M8.1 4.2V11.6M2.9 6.5H10.1M2.9 9.3H10.1" stroke="#2c842c" stroke-width="1.1"/></svg>
<div class="t" style="left:1563px;top:319.5px;">SpatialAnchorManager</div>
<div class="t b" style="left:1297.5px;top:348.5px;">Authentication</div>
<div class="t" style="left:1297.5px;top:366.5px;">Authentication Mode</div>
<div class="dd" style="left:1547px;top:365px;width:355px;height:18px;"></div>
<div class="t" style="left:1551px;top:365.5px;">Api Key</div>
<svg style="left:1888px;top:371.5px;" width="9" height="6" viewBox="0 0 9 6"><path d="M.5 .5H8.5L4.5 5.2Z" fill="#424242"/></svg>
<div class="t b" style="left:1297.5px;top:395.5px;">Credentials</div>
<div style="left:1278px;top:412.0px;width:2px;height:18px;background:#1e90e8"></div>
<div class="t b" style="left:1297.5px;top:413.5px;">Spatial Anchors Account Id</div>
<div class="fld" style="left:1547px;top:412.0px;width:355px;height:18px;"></div>
<div class="t b" style="left:1550px;top:413.5px;max-width:351px;overflow:hidden;letter-spacing:0.84px">1c2d8f61-3213-463e-83bd-2c05172e0252</div>
<div style="left:1278px;top:432.0px;width:2px;height:18px;background:#1e90e8"></div>
<div class="t b" style="left:1297.5px;top:433.5px;">Spatial Anchors Account Key</div>
<div class="fld" style="left:1547px;top:432.0px;width:355px;height:18px;"></div>
<div class="t b" style="left:1550px;top:433.5px;max-width:351px;overflow:hidden;letter-spacing:0.56px">0zM8RwcVlaPBMVu6Hk65Eh65Z4sF5MqfOgDT+qbpH7E=</div>
<div style="left:1278px;top:452.0px;width:2px;height:18px;background:#1e90e8"></div>
<div class="t b" style="left:1297.5px;top:453.5px;">Spatial Anchors Account Domain</div>
<div class="fld" style="left:1547px;top:452.0px;width:355px;height:18px;"></div>
<div class="t b" style="left:1550px;top:453.5px;max-width:351px;overflow:hidden;letter-spacing:0.2px">southcentralus.mixedreality.azure.com</div>
<div class="t b" style="left:1297.5px;top:482.5px;">Logging</div>
<div class="t" style="left:1297.5px;top:500.5px;">Log Level</div>
<div class="dd" style="left:1547px;top:499px;width:355px;height:18px;"></div>
<div class="t" style="left:1551px;top:499.5px;">All</div>
<svg style="left:1888px;top:505.5px;" width="9" height="6" viewBox="0 0 9 6"><path d="M.5 .5H8.5L4.5 5.2Z" fill="#424242"/></svg>
<div style="left:1278px;top:526px;width:628px;height:1px;background:#9a9a9a"></div>
<div style="left:1278px;top:527px;width:628px;height:20.5px;background:#cbcbcb;border-bottom:1px solid #bfbfbf"></div>
<div style="left:1278px;top:529px;width:2px;height:16px;background:#1e90e8"></div>
<svg style="left:1284px;top:533.5px;" width="9" height="8" viewBox="0 0 9 8"><path d="M0 .5H9L4.5 7.5Z" fill="#7a7a7a"/></svg>
<svg style="left:1299px;top:529.2px;opacity:1" width="13.52" height="15.600000000000001" viewBox="0 0 13 15"><path d="M1.5 .5H8.5L12.5 4V13.5Q12.5 14.5 11.5 14.5H1.5Q.5 14.5 .5 13.5V1.5Q.5 .5 1.5 .5Z" fill="#fff" stroke="#b8b8b8" stroke-width=".7"/><path d="M4.9 4.2V11.6M8.1 4.2V11.6M2.9 6.5H10.1M2.9 9.3H10.1" stroke="#2c842c" stroke-width="1.1"/></svg>
<div style="left:1318px;top:530px;width:14px;height:14px;border-radius:3px;background:#f0f0f0;border:1px solid #b4b4b4"></div>
<svg style="left:1320.5px;top:533px;" width="9" height="8" viewBox="0 0 9 8"><path d="M.8 4.2L3.3 6.8L8.2 1" stroke="#222" stroke-width="1.3" fill="none"/></svg>
<div class="t b" style="left:1338px;top:529.7px;">Anchor Module Script (Script)</div>
<svg style="left:1848px;top:532px;" width="10" height="10" viewBox="0 0 10 10"><circle cx="5" cy="5" r="5" fill="#555"/><text x="5" y="8.2" text-anchor="middle" font-family="Liberation Sans, sans-serif" font-weight="700" font-size="8.5" fill="#cbcbcb" letter-spacing="0">?</text></svg>
<svg style="left:1868px;top:532px;" width="10" height="10" viewBox="0 0 10 10"><path d="M0 2.5H5M8 2.5H10M0 7.5H2M4.5 7.5H10" stroke="#555" stroke-width="1.2"/><path d="M6.5 0V5M3.2 5V10" stroke="#555" stroke-width="2"/></svg>
<svg style="left:1891.5px;top:531px;" width="3" height="12" viewBox="0 0 3 12"><rect x=".4" y="0.65" width="2.2" height="2.2" rx=".7" fill="#555"/><rect x=".4" y="4.90" width="2.2" height="2.2" rx=".7" fill="#555"/><rect x=".4" y="9.15" width="2.2" height="2.2" rx=".7" fill="#555"/></svg>
<div class="t" style="left:1297.5px;top:553.5px;color:#7a7a7a">Script</div>
<div class="fld" style="left:1547px;top:552.0px;width:355px;height:18px;background:#dedede;border-color:#bcbcbc"></div>
<div style="left:1883px;top:553.0px;width:17px;height:16px;background:#dedede;border-radius:0 2px 2px 0"></div>
<svg style="left:1886.5px;top:555.5px;" width="11" height="11" viewBox="0 0 11 11"><circle cx="5.5" cy="5.5" r="4.6" fill="none" stroke="#9a9a9a" stroke-width="1"/><circle cx="5.5" cy="5.5" r="1.5" fill="#9a9a9a"/></svg>
<svg style="left:1550.5px;top:556.0px;opacity:0.55" width="9.36" height="10.799999999999999" viewBox="0 0 13 15"><path d="M1.5 .5H8.5L12.5 4V13.5Q12.5 14.5 11.5 14.5H1.5Q.5 14.5 .5 13.5V1.5Q.5 .5 1.5 .5Z" fill="#fff" stroke="#b8b8b8" stroke-width=".7"/><path d="M4.9 4.2V11.6M8.1 4.2V11.6M2.9 6.5H10.1M2.9 9.3H10.1" stroke="#2c842c" stroke-width="1.1"/></svg>
<div class="t" style="left:1563px;top:553.5px;color:#858585">AnchorModuleScript</div>
<div style="left:1278px;top:572px;width:2px;height:18px;background:#1e90e8"></div>
<div class="t b" style="left:1297.5px;top:573.5px;">Public Sharing Pin</div>
<div class="fld" style="left:1547px;top:572.0px;width:355px;height:18px;"></div>
<div class="t b" style="left:1550px;top:573.5px;max-width:351px;overflow:hidden;letter-spacing:0.65px">1982734901747122595</div>
<div style="left:1278px;top:599px;width:628px;height:1px;background:#9a9a9a"></div>
<div style="left:1278px;top:600px;width:628px;height:20.5px;background:#cbcbcb;border-bottom:1px solid #bfbfbf"></div>
<div style="left:1278px;top:602px;width:2px;height:16px;background:#1e90e8"></div>
<svg style="left:1284px;top:606.5px;" width="9" height="8" viewBox="0 0 9 8"><path d="M0 .5H9L4.5 7.5Z" fill="#7a7a7a"/></svg>
<svg style="left:1299px;top:602.2px;opacity:1" width="13.52" height="15.600000000000001" viewBox="0 0 13 15"><path d="M1.5 .5H8.5L12.5 4V13.5Q12.5 14.5 11.5 14.5H1.5Q.5 14.5 .5 13.5V1.5Q.5 .5 1.5 .5Z" fill="#fff" stroke="#b8b8b8" stroke-width=".7"/><path d="M4.9 4.2V11.6M8.1 4.2V11.6M2.9 6.5H10.1M2.9 9.3H10.1" stroke="#2c842c" stroke-width="1.1"/></svg>
<div style="left:1318px;top:603px;width:14px;height:14px;border-radius:3px;background:#f0f0f0;border:1px solid #b4b4b4"></div>
<svg style="left:1320.5px;top:606px;" width="9" height="8" viewBox="0 0 9 8"><path d="M.8 4.2L3.3 6.8L8.2 1" stroke="#222" stroke-width="1.3" fill="none"/></svg>
<div class="t b" style="left:1338px;top:602.7px;">Sharing Module Script (Script)</div>
<svg style="left:1848px;top:605px;" width="10" height="10" viewBox="0 0 10 10"><circle cx="5" cy="5" r="5" fill="#555"/><text x="5" y="8.2" text-anchor="middle" font-family="Liberation Sans, sans-serif" font-weight="700" font-size="8.5" fill="#cbcbcb" letter-spacing="0">?</text></svg>
<svg style="left:1868px;top:605px;" width="10" height="10" viewBox="0 0 10 10"><path d="M0 2.5H5M8 2.5H10M0 7.5H2M4.5 7.5H10" stroke="#555" stroke-width="1.2"/><path d="M6.5 0V5M3.2 5V10" stroke="#555" stroke-width="2"/></svg>
<svg style="left:1891.5px;top:604px;" width="3" height="12" viewBox="0 0 3 12"><rect x=".4" y="0.65" width="2.2" height="2.2" rx=".7" fill="#555"/><rect x=".4" y="4.90" width="2.2" height="2.2" rx=".7" fill="#555"/><rect x=".4" y="9.15" width="2.2" height="2.2" rx=".7" fill="#555"/></svg>
<div class="t" style="left:1297.5px;top:626.5px;color:#7a7a7a">Script</div>
<div class="fld" style="left:1547px;top:625.0px;width:355px;height:18px;background:#dedede;border-color:#bcbcbc"></div>
<div style="left:1883px;top:626.0px;width:17px;height:16px;background:#dedede;border-radius:0 2px 2px 0"></div>
<svg style="left:1886.5px;top:628.5px;" width="11" height="11" viewBox="0 0 11 11"><circle cx="5.5" cy="5.5" r="4.6" fill="none" stroke="#9a9a9a" stroke-width="1"/><circle cx="5.5" cy="5.5" r="1.5" fill="#9a9a9a"/></svg>
<svg style="left:1550.5px;top:629.0px;opacity:0.55" width="9.36" height="10.799999999999999" viewBox="0 0 13 15"><path d="M1.5 .5H8.5L12.5 4V13.5Q12.5 14.5 11.5 14.5H1.5Q.5 14.5 .5 13.5V1.5Q.5 .5 1.5 .5Z" fill="#fff" stroke="#b8b8b8" stroke-width=".7"/><path d="M4.9 4.2V11.6M8.1 4.2V11.6M2.9 6.5H10.1M2.9 9.3H10.1" stroke="#2c842c" stroke-width="1.1"/></svg>
<div class="t" style="left:1563px;top:626.5px;color:#858585">SharingModuleScript</div>
<div style="left:1278px;top:652px;width:628px;height:1px;background:#9a9a9a"></div>
<div style="left:1278px;top:653px;width:628px;height:20.5px;background:#cbcbcb;border-bottom:1px solid #bfbfbf"></div>
<svg style="left:1284px;top:659.5px;" width="9" height="8" viewBox="0 0 9 8"><path d="M0 .5H9L4.5 7.5Z" fill="#7a7a7a"/></svg>
<svg style="left:1298px;top:657px;opacity:1" width="16.0" height="12.0" viewBox="0 0 16 12"><path d="M2.5 .6H13.5Q15.4 .6 15.4 2.5V8Q15.4 10 13.5 10H10.2L8 11.4L5.8 10H2.5Q.6 10 .6 8V2.5Q.6 .6 2.5 .6Z" fill="#f6f6f6" stroke="#7d7d7d" stroke-width=".8"/><circle cx="4.7" cy="5.2" r="2.4" fill="#0ea5e0"/><circle cx="11.3" cy="5.2" r="2.4" fill="#0ea5e0"/></svg>
<div style="left:1318px;top:656px;width:14px;height:14px;border-radius:3px;background:#f0f0f0;border:1px solid #b4b4b4"></div>
<svg style="left:1320.5px;top:659px;" width="9" height="8" viewBox="0 0 9 8"><path d="M.8 4.2L3.3 6.8L8.2 1" stroke="#222" stroke-width="1.3" fill="none"/></svg>
<div class="t b" style="left:1338px;top:655.7px;">AR Session (Script)</div>
<svg style="left:1848px;top:658px;" width="10" height="10" viewBox="0 0 10 10"><circle cx="5" cy="5" r="5" fill="#555"/><text x="5" y="8.2" text-anchor="middle" font-family="Liberation Sans, sans-serif" font-weight="700" font-size="8.5" fill="#cbcbcb" letter-spacing="0">?</text></svg>
<svg style="left:1868px;top:658px;" width="10" height="10" viewBox="0 0 10 10"><path d="M0 2.5H5M8 2.5H10M0 7.5H2M4.5 7.5H10" stroke="#555" stroke-width="1.2"/><path d="M6.5 0V5M3.2 5V10" stroke="#555" stroke-width="2"/></svg>
<svg style="left:1891.5px;top:657px;" width="3" height="12" viewBox="0 0 3 12"><rect x=".4" y="0.65" width="2.2" height="2.2" rx=".7" fill="#555"/><rect x=".4" y="4.90" width="2.2" height="2.2" rx=".7" fill="#555"/><rect x=".4" y="9.15" width="2.2" height="2.2" rx=".7" fill="#555"/></svg>
<div class="t" style="left:1297.5px;top:679.5px;">Attempt Update</div>
<div style="left:1547px;top:680px;width:14px;height:14px;border-radius:3px;background:#f0f0f0;border:1px solid #b4b4b4"></div>
<svg style="left:1549.5px;top:683px;" width="9" height="8" viewBox="0 0 9 8"><path d="M.8 4.2L3.3 6.8L8.2 1" stroke="#222" stroke-width="1.3" fill="none"/></svg>
<div class="t" style="left:1297.5px;top:699.5px;">Match Frame Rate</div>
<div style="left:1547px;top:700px;width:14px;height:14px;border-radius:3px;background:#f0f0f0;border:1px solid #b4b4b4"></div>
<svg style="left:1549.5px;top:703px;" width="9" height="8" viewBox="0 0 9 8"><path d="M.8 4.2L3.3 6.8L8.2 1" stroke="#222" stroke-width="1.3" fill="none"/></svg>
<div style="left:1296px;top:718px;width:606px;height:65.5px;background:#cdcdcd;border:1px solid #a9a9a9;border-radius:3px"></div>
<svg style="left:1300px;top:733.5px;" width="32" height="34" viewBox="0 0 32 34"><path d="M15 1.5A13.5 13.5 0 1 0 21.2 27L26.5 31.5L25.4 24.2A13.5 13.5 0 0 0 15 1.5Z" fill="#fff" stroke="#9a9a9a" stroke-width="1.4"/><rect x="13.5" y="7" width="3" height="12" rx="1.3" fill="#555"/><circle cx="15" cy="22.8" r="1.9" fill="#555"/></svg>
<div class="t" style="left:1333.5px;top:719.5px;font-size:10px;letter-spacing:.44px;line-height:12px;height:12px;margin-top:2px">'Match Frame Rate' does three things:</div>
<div class="t" style="left:1333.5px;top:731.5px;font-size:10px;letter-spacing:.44px;line-height:12px;height:12px;margin-top:2px">- Blocks each render frame until the next AR frame is ready</div>
<div class="t" style="left:1333.5px;top:743.5px;font-size:10px;letter-spacing:.44px;line-height:12px;height:12px;margin-top:2px">- Sets the target frame rate to the session's preferred update rate</div>
<div class="t" style="left:1333.5px;top:755.5px;font-size:10px;letter-spacing:.44px;line-height:12px;height:12px;margin-top:2px">- Disables VSync</div>
<div class="t" style="left:1333.5px;top:767.5px;font-size:10px;letter-spacing:.44px;line-height:12px;height:12px;margin-top:2px">These settings are not reverted when the ARSession is disabled.</div>
<div class="t" style="left:1297.5px;top:787.5px;">Tracking Mode</div>
<div class="dd" style="left:1547px;top:786px;width:355px;height:18px;"></div>
<div class="t" style="left:1551px;top:786.5px;">Position And Rotation</div>
<svg style="left:1888px;top:792.5px;" width="9" height="6" viewBox="0 0 9 6"><path d="M.5 .5H8.5L4.5 5.2Z" fill="#424242"/></svg>
<div style="left:1278px;top:813px;width:628px;height:1px;background:#9a9a9a"></div>
<div style="left:1278px;top:814px;width:628px;height:20.5px;background:#cbcbcb;border-bottom:1px solid #bfbfbf"></div>
<svg style="left:1284px;top:820.5px;" width="9" height="8" viewBox="0 0 9 8"><path d="M0 .5H9L4.5 7.5Z" fill="#7a7a7a"/></svg>
<svg style="left:1298px;top:818px;opacity:1" width="16.0" height="12.0" viewBox="0 0 16 12"><path d="M2.5 .6H13.5Q15.4 .6 15.4 2.5V8Q15.4 10 13.5 10H10.2L8 11.4L5.8 10H2.5Q.6 10 .6 8V2.5Q.6 .6 2.5 .6Z" fill="#f6f6f6" stroke="#7d7d7d" stroke-width=".8"/><circle cx="4.7" cy="5.2" r="2.4" fill="#0ea5e0"/><circle cx="11.3" cy="5.2" r="2.4" fill="#0ea5e0"/></svg>
<div style="left:1318px;top:817px;width:14px;height:14px;border-radius:3px;background:#f0f0f0;border:1px solid #b4b4b4"></div>
<svg style="left:1320.5px;top:820px;" width="9" height="8" viewBox="0 0 9 8"><path d="M.8 4.2L3.3 6.8L8.2 1" stroke="#222" stroke-width="1.3" fill="none"/></svg>
<div class="t b" style="left:1338px;top:816.7px;">AR Session Origin (Script)</div>
<svg style="left:1848px;top:819px;" width="10" height="10" viewBox="0 0 10 10"><circle cx="5" cy="5" r="5" fill="#555"/><text x="5" y="8.2" text-anchor="middle" font-family="Liberation Sans, sans-serif" font-weight="700" font-size="8.5" fill="#cbcbcb" letter-spacing="0">?</text></svg>
<svg style="left:1868px;top:819px;" width="10" height="10" viewBox="0 0 10 10"><path d="M0 2.5H5M8 2.5H10M0 7.5H2M4.5 7.5H10" stroke="#555" stroke-width="1.2"/><path d="M6.5 0V5M3.2 5V10" stroke="#555" stroke-width="2"/></svg>
<svg style="left:1891.5px;top:818px;" width="3" height="12" viewBox="0 0 3 12"><rect x=".4" y="0.65" width="2.2" height="2.2" rx=".7" fill="#555"/><rect x=".4" y="4.90" width="2.2" height="2.2" rx=".7" fill="#555"/><rect x=".4" y="9.15" width="2.2" height="2.2" rx=".7" fill="#555"/></svg>
<div class="t" style="left:1297.5px;top:840.5px;color:#7a7a7a">Script</div>
<div class="fld" style="left:1547px;top:839.0px;width:355px;height:18px;background:#dedede;border-color:#bcbcbc"></div>
<div style="left:1883px;top:840.0px;width:17px;height:16px;background:#dedede;border-radius:0 2px 2px 0"></div>
<svg style="left:1886.5px;top:842.5px;" width="11" height="11" viewBox="0 0 11 11"><circle cx="5.5" cy="5.5" r="4.6" fill="none" stroke="#9a9a9a" stroke-width="1"/><circle cx="5.5" cy="5.5" r="1.5" fill="#9a9a9a"/></svg>
<svg style="left:1549px;top:844.5px;opacity:0.55" width="12.48" height="9.36" viewBox="0 0 16 12"><path d="M2.5 .6H13.5Q15.4 .6 15.4 2.5V8Q15.4 10 13.5 10H10.2L8 11.4L5.8 10H2.5Q.6 10 .6 8V2.5Q.6 .6 2.5 .6Z" fill="#f6f6f6" stroke="#7d7d7d" stroke-width=".8"/><circle cx="4.7" cy="5.2" r="2.4" fill="#0ea5e0"/><circle cx="11.3" cy="5.2" r="2.4" fill="#0ea5e0"/></svg>
<div class="t" style="left:1563px;top:840.5px;color:#858585">ARSessionOrigin</div>
<div style="left:1278px;top:859px;width:2px;height:18px;background:#1e90e8"></div>
<div class="t b" style="left:1297.5px;top:860.5px;">Camera</div>
<div class="fld" style="left:1547px;top:859.0px;width:355px;height:18px;background:#3a72b0;border-color:#4a4646"></div>
<div style="left:1883px;top:860.0px;width:17px;height:16px;background:#e4e4e4;border-radius:0 2px 2px 0"></div>
<svg style="left:1886.5px;top:862.5px;" width="11" height="11" viewBox="0 0 11 11"><circle cx="5.5" cy="5.5" r="4.6" fill="none" stroke="#333" stroke-width="1"/><circle cx="5.5" cy="5.5" r="1.5" fill="#333"/></svg>
<svg style="left:1551.5px;top:865.0px;" width="9" height="7" viewBox="0 0 9 7"><rect x="0" y=".5" width="6.3" height="6" fill="#1a6fd8"/><path d="M6.6 2.6L8.8 .9V6.1L6.6 4.4Z" fill="#1a6fd8"/></svg>
<div class="t b" style="left:1563px;top:860.5px;">Main Camera (Camera)</div>
<div style="left:1278px;top:886px;width:628px;height:1px;background:#9a9a9a"></div>
<div style="left:1278px;top:887px;width:628px;height:20.5px;background:#cbcbcb;border-bottom:1px solid #bfbfbf"></div>
<svg style="left:1284px;top:893.5px;" width="9" height="8" viewBox="0 0 9 8"><path d="M0 .5H9L4.5 7.5Z" fill="#7a7a7a"/></svg>
<svg style="left:1298px;top:891px;opacity:1" width="16.0" height="12.0" viewBox="0 0 16 12"><path d="M2.5 .6H13.5Q15.4 .6 15.4 2.5V8Q15.4 10 13.5 10H10.2L8 11.4L5.8 10H2.5Q.6 10 .6 8V2.5Q.6 .6 2.5 .6Z" fill="#f6f6f6" stroke="#7d7d7d" stroke-width=".8"/><circle cx="4.7" cy="5.2" r="2.4" fill="#0ea5e0"/><circle cx="11.3" cy="5.2" r="2.4" fill="#0ea5e0"/></svg>
<div style="left:1318px;top:890px;width:14px;height:14px;border-radius:3px;background:#f0f0f0;border:1px solid #b4b4b4"></div>
<svg style="left:1320.5px;top:893px;" width="9" height="8" viewBox="0 0 9 8"><path d="M.8 4.2L3.3 6.8L8.2 1" stroke="#222" stroke-width="1.3" fill="none"/></svg>
<div class="t b" style="left:1338px;top:889.7px;">AR Anchor Manager (Script)</div>
<svg style="left:1848px;top:892px;" width="10" height="10" viewBox="0 0 10 10"><circle cx="5" cy="5" r="5" fill="#555"/><text x="5" y="8.2" text-anchor="middle" font-family="Liberation Sans, sans-serif" font-weight="700" font-size="8.5" fill="#cbcbcb" letter-spacing="0">?</text></svg>
<svg style="left:1868px;top:892px;" width="10" height="10" viewBox="0 0 10 10"><path d="M0 2.5H5M8 2.5H10M0 7.5H2M4.5 7.5H10" stroke="#555" stroke-width="1.2"/><path d="M6.5 0V5M3.2 5V10" stroke="#555" stroke-width="2"/></svg>
<svg style="left:1891.5px;top:891px;" width="3" height="12" viewBox="0 0 3 12"><rect x=".4" y="0.65" width="2.2" height="2.2" rx=".7" fill="#555"/><rect x=".4" y="4.90" width="2.2" height="2.2" rx=".7" fill="#555"/><rect x=".4" y="9.15" width="2.2" height="2.2" rx=".7" fill="#555"/></svg>
<div class="t" style="left:1297.5px;top:913.5px;color:#7a7a7a">Script</div>
<div class="fld" style="left:1547px;top:912.0px;width:355px;height:18px;background:#dedede;border-color:#bcbcbc"></div>
<div style="left:1883px;top:913.0px;width:17px;height:16px;background:#dedede;border-radius:0 2px 2px 0"></div>
<svg style="left:1886.5px;top:915.5px;" width="11" height="11" viewBox="0 0 11 11"><circle cx="5.5" cy="5.5" r="4.6" fill="none" stroke="#9a9a9a" stroke-width="1"/><circle cx="5.5" cy="5.5" r="1.5" fill="#9a9a9a"/></svg>
<svg style="left:1549px;top:917.5px;opacity:0.55" width="12.48" height="9.36" viewBox="0 0 16 12"><path d="M2.5 .6H13.5Q15.4 .6 15.4 2.5V8Q15.4 10 13.5 10H10.2L8 11.4L5.8 10H2.5Q.6 10 .6 8V2.5Q.6 .6 2.5 .6Z" fill="#f6f6f6" stroke="#7d7d7d" stroke-width=".8"/><circle cx="4.7" cy="5.2" r="2.4" fill="#0ea5e0"/><circle cx="11.3" cy="5.2" r="2.4" fill="#0ea5e0"/></svg>
<div class="t" style="left:1563px;top:913.5px;color:#858585">ARAnchorManager</div>
<div class="t" style="left:1297.5px;top:933.5px;">Anchor Prefab</div>
<div class="fld" style="left:1547px;top:932.0px;width:355px;height:18px;background:#f0f0f0"></div>
<div style="left:1883px;top:933.0px;width:17px;height:16px;background:#e4e4e4;border-radius:0 2px 2px 0"></div>
<svg style="left:1886.5px;top:935.5px;" width="11" height="11" viewBox="0 0 11 11"><circle cx="5.5" cy="5.5" r="4.6" fill="none" stroke="#333" stroke-width="1"/><circle cx="5.5" cy="5.5" r="1.5" fill="#333"/></svg>
<div class="t" style="left:1550px;top:933.5px;">None (Game Object)</div>
<div style="left:1278px;top:959px;width:628px;height:1px;background:#9a9a9a"></div>
<div class="btn" style="left:1477px;top:968px;width:229.5px;height:23.5px;"></div>
<div class="t" style="left:1477.5px;top:972px;width:229px;text-align:center">Add Component</div>
<div style="left:0px;top:995px;width:1919px;height:23px;background:#8a8a8a"></div>
<div style="left:0px;top:1017px;width:1919px;height:1px;background:#1a1a1a"></div>
<div style="left:1813px;top:997px;width:1px;height:20px;background:#9c9c9c"></div>
<div style="left:1839px;top:997px;width:1px;height:20px;background:#9c9c9c"></div>
<div style="left:1865.5px;top:997px;width:1px;height:20px;background:#9c9c9c"></div>
<div style="left:1892px;top:997px;width:1px;height:20px;background:#9c9c9c"></div>
<svg style="left:1817.5px;top:998.3px;" width="17" height="16" viewBox="0 0 17 16"><ellipse cx="8.5" cy="9" rx="3.4" ry="4.6" fill="#555"/><circle cx="8.5" cy="3.6" r="2" fill="#555"/><path d="M2 5L5.5 7.5M15 5L11.5 7.5M1.5 9.5H5M12 9.5H15.5M2.5 14L5.5 11.5M14.5 14L11.5 11.5" stroke="#555" stroke-width="1.1"/><path d="M2 1.5L15.5 15" stroke="#555" stroke-width="1.3"/></svg>
<svg style="left:1844px;top:998.3px;" width="17" height="16" viewBox="0 0 17 16"><ellipse cx="8" cy="4" rx="5.5" ry="2.4" fill="#555"/><path d="M2.5 6.5Q8 10 13.5 6.5V9Q8 12.5 2.5 9Z" fill="#555"/><path d="M2.5 10.5Q8 14 13.5 10.5V12.5Q8 16 2.5 12.5Z" fill="#555"/><path d="M2 1.5L15.5 15" stroke="#555" stroke-width="1.3"/></svg>
<svg style="left:1870px;top:998.3px;" width="18" height="16" viewBox="0 0 18 16"><circle cx="9" cy="8" r="5.2" fill="none" stroke="#555" stroke-width="1.2" stroke-dasharray="6 2"/><circle cx="9" cy="8" r="2" fill="#555"/><path d="M2.5 1.5L15.5 14.5" stroke="#555" stroke-width="1.3"/></svg>
<svg style="left:1897.5px;top:999.3px;" width="15" height="15" viewBox="0 0 15 15"><circle cx="7.5" cy="7.5" r="6.6" fill="none" stroke="#555" stroke-width="1.1"/><path d="M4.5 7.8L6.8 10L10.8 5.2" stroke="#555" stroke-width="1.2" fill="none"/></svg>
</div>
</body></html>
